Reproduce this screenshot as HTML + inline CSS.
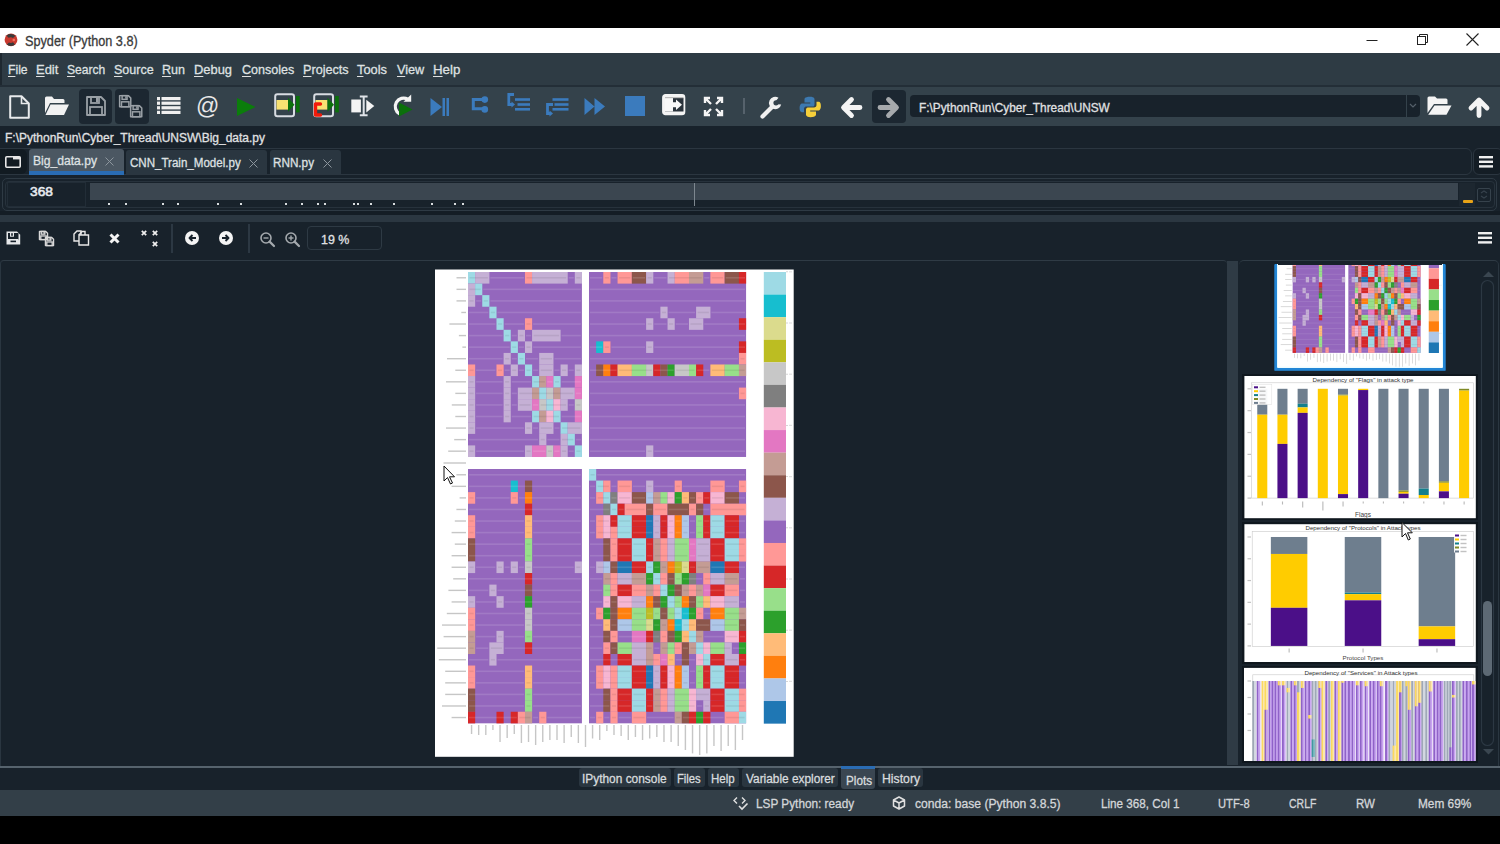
<!DOCTYPE html>
<html><head><meta charset="utf-8"><style>
html,body{margin:0;padding:0;}
body{width:1500px;height:844px;position:relative;overflow:hidden;background:#18222b;font-family:"Liberation Sans",sans-serif;}
u{text-decoration:underline;text-underline-offset:2px;}
</style></head><body>
<div style="position:absolute;left:0px;top:0px;width:1500px;height:28px;background:#000;"></div><div style="position:absolute;left:0px;top:28px;width:1500px;height:25px;background:#ffffff;"></div><div style="position:absolute;left:0px;top:53px;width:1500px;height:33px;background:#2e3b44;"></div><div style="position:absolute;left:0px;top:86px;width:1500px;height:40px;background:#34424b;"></div><div style="position:absolute;left:0px;top:126px;width:1500px;height:22px;background:#18222b;"></div><div style="position:absolute;left:0px;top:148px;width:1500px;height:29px;background:#18222b;"></div><div style="position:absolute;left:0px;top:177px;width:1500px;height:35px;background:#18222b;"></div><div style="position:absolute;left:0px;top:212px;width:1500px;height:4px;background:#18222b;"></div><div style="position:absolute;left:0px;top:215px;width:1500px;height:7px;background:#2b3741;"></div><div style="position:absolute;left:0px;top:222px;width:1500px;height:38px;background:#18222b;"></div><div style="position:absolute;left:0px;top:260px;width:1500px;height:506px;background:#18222b;"></div><div style="position:absolute;left:0px;top:766px;width:1500px;height:24px;background:#18222b;"></div><div style="position:absolute;left:0px;top:790px;width:1500px;height:26px;background:#333f48;"></div><div style="position:absolute;left:0px;top:816px;width:1500px;height:28px;background:#000;"></div><svg style="position:absolute;left:4px;top:33px;overflow:visible;" width="14" height="14" viewBox="0 0 14 14"><circle cx="7" cy="6.8" r="6.4" fill="#c8392e"/><path d="M2.5 2.5 Q7 -0.5 11.5 2.8 L9 5 Q7 3.5 4.5 4.8 Z" fill="#3a3a3a"/><path d="M2.8 11.5 Q7 14.5 11 11.5 L9 9.2 Q7 10.5 5 9.5 Z" fill="#3a3a3a"/><circle cx="9.8" cy="7" r="1.3" fill="#f07060"/></svg><svg style="position:absolute;left:1366px;top:34px;overflow:visible;" width="12" height="12" viewBox="0 0 12 12"><path d="M0.5 6.5 H11.5" stroke="#222" stroke-width="1"/></svg><svg style="position:absolute;left:1416px;top:33px;overflow:visible;" width="13" height="13" viewBox="0 0 13 13"><rect x="1.5" y="3.5" width="8" height="8" fill="none" stroke="#222" stroke-width="1"/><path d="M3.5 3.5 V1.5 H11.5 V9.5 H9.5" fill="none" stroke="#222" stroke-width="1"/></svg><svg style="position:absolute;left:1466px;top:33px;overflow:visible;" width="13" height="13" viewBox="0 0 13 13"><path d="M0.5 0.5 L12.5 12.5 M12.5 0.5 L0.5 12.5" stroke="#222" stroke-width="1.1"/></svg><div style="position:absolute;left:0px;top:53px;width:1.5px;height:33px;background:#1e2830;"></div><div style="position:absolute;left:0px;top:85px;width:1500px;height:1.5px;background:#232e37;"></div><div style="position:absolute;left:79px;top:89px;width:33px;height:35px;background:#1c2731;border-radius:4px;"></div><div style="position:absolute;left:115px;top:89px;width:34px;height:35px;background:#1c2731;border-radius:4px;"></div><div style="position:absolute;left:872px;top:90px;width:34px;height:33px;background:#1c2731;border-radius:4px;"></div><svg style="position:absolute;left:9px;top:95px;overflow:visible;" width="22" height="24" viewBox="0 0 22 24"><path d="M1.2 1.2 H12.5 L19.8 8.5 V22.8 H1.2 Z" fill="none" stroke="#e8eaec" stroke-width="2" stroke-linejoin="round"/><path d="M12.5 1.2 V8.5 H19.8" fill="none" stroke="#e8eaec" stroke-width="1.6"/></svg><svg style="position:absolute;left:44px;top:96px;overflow:visible;" width="26" height="20" viewBox="0 0 26 20"><path d="M1 2 Q1 0.5 2.5 0.5 H8 L10 3 H19 Q20.5 3 20.5 4.5 V7 H6 L1 17 Z" fill="#f2f2f2"/><path d="M6.5 8.5 H25 L20 19 H1.5 Z" fill="#f2f2f2"/></svg><svg style="position:absolute;left:86px;top:96px;overflow:visible;" width="20.0" height="20.0" viewBox="0 0 20.0 20.0"><g transform="scale(1.0)"><path d="M1 1 H15 L19 5 V19 H1 Z" fill="none" stroke="#9aa0a6" stroke-width="1.8" stroke-linejoin="round"/><rect x="5" y="1" width="8" height="6" fill="none" stroke="#9aa0a6" stroke-width="1.8"/><rect x="10" y="2" width="2" height="4" fill="#9aa0a6"/><rect x="4" y="11" width="12" height="8" fill="none" stroke="#9aa0a6" stroke-width="1.8"/></g></svg><svg style="position:absolute;left:119px;top:95px;overflow:visible;" width="12.4" height="12.4" viewBox="0 0 12.4 12.4"><g transform="scale(0.62)"><path d="M1 1 H15 L19 5 V19 H1 Z" fill="none" stroke="#9aa0a6" stroke-width="2.4" stroke-linejoin="round"/><rect x="5" y="1" width="8" height="6" fill="none" stroke="#9aa0a6" stroke-width="2.4"/><rect x="10" y="2" width="2" height="4" fill="#9aa0a6"/><rect x="4" y="11" width="12" height="8" fill="none" stroke="#9aa0a6" stroke-width="2.4"/></g></svg><svg style="position:absolute;left:130px;top:105px;overflow:visible;" width="12.4" height="12.4" viewBox="0 0 12.4 12.4"><g transform="scale(0.62)"><path d="M1 1 H15 L19 5 V19 H1 Z" fill="none" stroke="#9aa0a6" stroke-width="2.4" stroke-linejoin="round"/><rect x="5" y="1" width="8" height="6" fill="none" stroke="#9aa0a6" stroke-width="2.4"/><rect x="10" y="2" width="2" height="4" fill="#9aa0a6"/><rect x="4" y="11" width="12" height="8" fill="none" stroke="#9aa0a6" stroke-width="2.4"/></g></svg><svg style="position:absolute;left:157px;top:97px;overflow:visible;" width="24" height="19" viewBox="0 0 24 19"><rect x="0" y="0.0" width="3" height="3.2" fill="#f0f0f0"/><rect x="4.5" y="0.0" width="19" height="3.2" fill="#f0f0f0"/><rect x="0" y="4.6" width="3" height="3.2" fill="#f0f0f0"/><rect x="4.5" y="4.6" width="19" height="3.2" fill="#f0f0f0"/><rect x="0" y="9.2" width="3" height="3.2" fill="#f0f0f0"/><rect x="4.5" y="9.2" width="19" height="3.2" fill="#f0f0f0"/><rect x="0" y="13.799999999999999" width="3" height="3.2" fill="#f0f0f0"/><rect x="4.5" y="13.799999999999999" width="19" height="3.2" fill="#f0f0f0"/></svg><div style="position:absolute;left:196px;top:92px;font-size:23px;line-height:28px;color:#e8e8e8;font-family:'Liberation Sans';">@</div><svg style="position:absolute;left:237px;top:98px;overflow:visible;" width="19" height="18" viewBox="0 0 19 18"><path d="M0 0 L18.5 9 L0 18 Z" fill="#0b7d0b"/></svg><svg style="position:absolute;left:273px;top:93px;overflow:visible;" width="28" height="24" viewBox="0 0 28 24"><rect x="2.2" y="1.2" width="18.8" height="22" rx="2.2" fill="none" stroke="#d8dce2" stroke-width="2"/><rect x="3.5" y="7" width="11.5" height="9.6" fill="#f8e272"/><path d="M15 4.8 L21.5 11.8 L15 18.8 Z" fill="#0b700b"/><rect x="23" y="3" width="3.6" height="16.4" fill="#0b700b"/></svg><svg style="position:absolute;left:312px;top:93px;overflow:visible;" width="28" height="24" viewBox="0 0 28 24"><rect x="2.2" y="1.2" width="18.8" height="22" rx="2.2" fill="none" stroke="#d8dce2" stroke-width="2"/><rect x="3.5" y="7" width="12" height="9.6" fill="#f8e272"/><path d="M8.5 11 H3.5 V22 H8.5" fill="none" stroke="#f21a0a" stroke-width="3.4" stroke-linejoin="round" stroke-linecap="round"/><path d="M15.5 4.8 L22 11.8 L15.5 18.8 Z" fill="#0b700b"/><rect x="23.2" y="3" width="3.6" height="16.4" fill="#0b700b"/></svg><svg style="position:absolute;left:351px;top:95px;overflow:visible;" width="25" height="22" viewBox="0 0 25 22"><rect x="0.3" y="4.5" width="9.6" height="12.9" fill="#f4f4f4"/><path d="M8.8 1.5 H16.6 M12.7 1.5 V20.2 M8.8 20.2 H16.6" stroke="#dfe3e8" stroke-width="2"/><path d="M15.3 4.8 L23.3 11 L15.3 17.4 Z" fill="#f4f4f4"/></svg><svg style="position:absolute;left:391px;top:94px;overflow:visible;" width="23" height="24" viewBox="0 0 23 24"><path d="M16.8 5.2 A8 8 0 1 0 8.5 19.8" fill="none" stroke="#f4f4f4" stroke-width="3.2"/><path d="M12.5 7.8 L20.2 7.8 L20.2 0.6 Z" fill="#f4f4f4"/><path d="M8 8.5 L21.5 15.5 L8 22.4 Z" fill="#0b700b"/></svg><svg style="position:absolute;left:430px;top:97px;overflow:visible;" width="20" height="20" viewBox="0 0 20 20"><path d="M0.5 1 L12 10 L0.5 19 Z" fill="#3b7bbd"/><rect x="12.5" y="1" width="2.5" height="18" fill="#3b7bbd"/><rect x="16.5" y="1" width="2.5" height="18" fill="#3b7bbd"/></svg><svg style="position:absolute;left:471px;top:96px;overflow:visible;" width="19" height="18" viewBox="0 0 19 18"><path d="M13 3.5 H2.3 V12.8 H13" fill="none" stroke="#3b7bbd" stroke-width="3"/><circle cx="13.8" cy="3.6" r="3.3" fill="#3b7bbd"/><circle cx="13.8" cy="13.4" r="3.3" fill="#3b7bbd"/></svg><svg style="position:absolute;left:506px;top:92px;overflow:visible;" width="25" height="20" viewBox="0 0 25 20"><path d="M8 2.5 H2.8 V12.5 H6" fill="none" stroke="#3b7bbd" stroke-width="2.8"/><path d="M5.5 9.5 L9 12.5 L5.5 15.5 Z" fill="#3b7bbd"/><rect x="9" y="6.2" width="15" height="2.6" fill="#3b7bbd"/><rect x="11.5" y="11.2" width="12.5" height="2.6" fill="#3b7bbd"/><rect x="9" y="16" width="15" height="2.6" fill="#3b7bbd"/></svg><svg style="position:absolute;left:545px;top:96px;overflow:visible;" width="25" height="21" viewBox="0 0 25 21"><path d="M8 8.5 H2.5 V17.5 H5" fill="none" stroke="#3b7bbd" stroke-width="2.8"/><path d="M4.5 14.5 L8 17.5 L4.5 20.5 Z" fill="#3b7bbd"/><rect x="7.5" y="2.2" width="16" height="2.6" fill="#3b7bbd"/><rect x="9.5" y="7.2" width="14" height="2.6" fill="#3b7bbd"/><rect x="7.5" y="12" width="16" height="2.6" fill="#3b7bbd"/></svg><svg style="position:absolute;left:584px;top:97px;overflow:visible;" width="22" height="19" viewBox="0 0 22 19"><path d="M0.5 1 L10.5 9.5 L0.5 18 Z M10.5 1 L21 9.5 L10.5 18 Z" fill="#3b7bbd"/></svg><div style="position:absolute;left:625px;top:96px;width:20px;height:20px;background:#3b7bbd;"></div><svg style="position:absolute;left:662px;top:94px;overflow:visible;" width="24" height="22" viewBox="0 0 24 22"><rect x="1.2" y="1.2" width="21" height="19" rx="2.2" fill="#f4f4f4" stroke="#f4f4f4" stroke-width="2.2"/><rect x="3" y="4" width="18.5" height="13.5" fill="#2a333b"/><rect x="3" y="4" width="8" height="13.5" fill="#f8f8f8"/><path d="M9 8.3 H14 V5.5 L20 10.8 L14 16 V13.2 H9 Z" fill="#f8f8f8"/><rect x="3" y="3" width="18.5" height="1.2" fill="#bbb"/></svg><svg style="position:absolute;left:704px;top:97px;overflow:visible;" width="19" height="19" viewBox="0 0 19 19"><g fill="none" stroke="#f4f4f4" stroke-width="2.4"><path d="M1 6 V1 H6 M1 1 L7 7"/><path d="M13 1 H18 V6 M18 1 L12 7"/><path d="M1 13 V18 H6 M1 18 L7 12"/><path d="M18 13 V18 H13 M18 18 L12 12"/></g></svg><div style="position:absolute;left:743px;top:98px;width:1.5px;height:16px;background:#56626c;"></div><svg style="position:absolute;left:760px;top:96px;overflow:visible;" width="23" height="23" viewBox="0 0 23 23"><path d="M2.5 20.5 L12 11" stroke="#f0f0f0" stroke-width="4.2" stroke-linecap="round"/><path d="M18.5 1.8 A6.2 6.2 0 1 0 21.2 8.5 L17.5 8.2 L15.2 5.8 Z" fill="#f0f0f0"/><circle cx="16" cy="6.8" r="2.6" fill="#34424b"/></svg><svg style="position:absolute;left:799px;top:96px;overflow:visible;" width="23" height="22" viewBox="0 0 23 22"><path d="M11 0.8 C5 0.8 5.5 3.5 5.5 3.5 V6.5 H11.3 V7.5 H3.2 C3.2 7.5 0.6 7.4 0.6 12 C0.6 16.5 3 16.2 3 16.2 H5 V13 C5 13 5 10.6 7.4 10.6 H13.2 C13.2 10.6 15.5 10.7 15.5 8.4 V3.4 C15.5 3.4 15.8 0.8 11 0.8 Z" fill="#3d79b0"/><path d="M11.5 21.2 C17.5 21.2 17 18.5 17 18.5 V15.5 H11.2 V14.5 H19.3 C19.3 14.5 21.9 14.6 21.9 10 C21.9 5.5 19.5 5.8 19.5 5.8 H17.5 V9 C17.5 9 17.5 11.4 15.1 11.4 H9.3 C9.3 11.4 7 11.3 7 13.6 V18.6 C7 18.6 6.7 21.2 11.5 21.2 Z" fill="#f6cf3a"/></svg><svg style="position:absolute;left:841px;top:97px;overflow:visible;" width="21" height="21" viewBox="0 0 21 21"><path d="M19 10.5 H4 M10.5 2.5 L2.5 10.5 L10.5 18.5" fill="none" stroke="#f4f4f4" stroke-width="4.8" stroke-linecap="round" stroke-linejoin="round"/></svg><svg style="position:absolute;left:878px;top:97px;overflow:visible;" width="21" height="21" viewBox="0 0 21 21"><path d="M2 10.5 H17 M10.5 2.5 L18.5 10.5 L10.5 18.5" fill="none" stroke="#a6a9ac" stroke-width="4.8" stroke-linecap="round" stroke-linejoin="round"/></svg><div style="position:absolute;left:910px;top:95px;width:496px;height:22px;background:#18222b;border-radius:4px 0 0 4px;"></div><div style="position:absolute;left:1407px;top:95px;width:12.5px;height:22px;background:#18222b;border-radius:0 4px 4px 0;"></div><svg style="position:absolute;left:1409px;top:103px;overflow:visible;" width="8" height="5" viewBox="0 0 8 5"><path d="M1 1 L4 4 L7 1" fill="none" stroke="#55606a" stroke-width="1.2"/></svg><svg style="position:absolute;left:1427px;top:96px;overflow:visible;" width="25" height="19" viewBox="0 0 25 19"><path d="M0.5 2 Q0.5 0.5 2 0.5 H8 L10 2.5 H19 Q20.5 2.5 20.5 4 V8 H7 L0.5 17 Z" fill="#f4f4f4"/><path d="M7.5 9.5 H24.5 L19.5 18.8 H1.2 Z" fill="#f4f4f4"/></svg><svg style="position:absolute;left:1468px;top:97px;overflow:visible;" width="22" height="20" viewBox="0 0 22 20"><path d="M11 18.5 V3.5 M3 11 L11 3 L19 11" fill="none" stroke="#f4f4f4" stroke-width="4.8" stroke-linecap="round" stroke-linejoin="round"/></svg><div style="position:absolute;left:-6px;top:148px;width:1478px;height:27px;background:transparent;border:1px solid #2b3640;border-radius:6px;box-sizing:border-box;"></div><div style="position:absolute;left:1473px;top:148px;width:30px;height:27px;background:#141d25;border:1px solid #2b3640;border-radius:6px;box-sizing:border-box;"></div><div style="position:absolute;left:0px;top:149px;width:27px;height:25px;background:#121b22;border-radius:0 6px 6px 0;"></div><svg style="position:absolute;left:5px;top:156px;overflow:visible;" width="16" height="12" viewBox="0 0 16 12"><rect x="0.8" y="0.8" width="14.4" height="10.4" rx="1" fill="none" stroke="#e8e8e8" stroke-width="1.6"/><rect x="8" y="0.8" width="7.2" height="2.6" fill="#e8e8e8"/></svg><div style="position:absolute;left:29px;top:149px;width:95px;height:26px;background:#4b5762;border-radius:3px 3px 0 0;"></div><div style="position:absolute;left:29px;top:171px;width:95px;height:4px;background:#2a6cb3;"></div><svg style="position:absolute;left:105px;top:157px;overflow:visible;" width="9" height="9" viewBox="0 0 9 9"><path d="M0.5 0.5 L8.5 8.5 M8.5 0.5 L0.5 8.5" stroke="#8d969e" stroke-width="1"/></svg><div style="position:absolute;left:126px;top:150px;width:141px;height:24px;background:#2a3640;border-radius:3px 3px 0 0;"></div><svg style="position:absolute;left:249px;top:158.5px;overflow:visible;" width="9" height="9" viewBox="0 0 9 9"><path d="M0.5 0.5 L8.5 8.5 M8.5 0.5 L0.5 8.5" stroke="#8d969e" stroke-width="1"/></svg><div style="position:absolute;left:270px;top:150px;width:71px;height:24px;background:#2a3640;border-radius:3px 3px 0 0;"></div><svg style="position:absolute;left:323px;top:158.5px;overflow:visible;" width="9" height="9" viewBox="0 0 9 9"><path d="M0.5 0.5 L8.5 8.5 M8.5 0.5 L0.5 8.5" stroke="#8d969e" stroke-width="1"/></svg><svg style="position:absolute;left:1479px;top:156px;overflow:visible;" width="14" height="12" viewBox="0 0 14 12"><rect x="0" y="0.0" width="14" height="2.4" fill="#f0f0f0"/><rect x="0" y="4.6" width="14" height="2.4" fill="#f0f0f0"/><rect x="0" y="9.2" width="14" height="2.4" fill="#f0f0f0"/></svg><div style="position:absolute;left:2px;top:178px;width:1495px;height:33px;background:transparent;border:1px solid #2e3a44;border-radius:5px;box-sizing:border-box;"></div><div style="position:absolute;left:7px;top:182px;width:79px;height:25px;background:#18222b;border:1px solid #222d37;box-sizing:border-box;"></div><div style="position:absolute;left:90px;top:183px;width:1368px;height:16.5px;background:#3b4650;"></div><div style="position:absolute;left:694px;top:183px;width:1px;height:23px;background:#7d878f;"></div><div style="position:absolute;left:107.5px;top:203px;width:2px;height:2px;background:#d8dcdf;"></div><div style="position:absolute;left:124.5px;top:203px;width:2px;height:2px;background:#d8dcdf;"></div><div style="position:absolute;left:161.5px;top:203px;width:2px;height:2px;background:#d8dcdf;"></div><div style="position:absolute;left:177px;top:203px;width:2px;height:2px;background:#d8dcdf;"></div><div style="position:absolute;left:216.5px;top:203px;width:2px;height:2px;background:#d8dcdf;"></div><div style="position:absolute;left:239.5px;top:203px;width:2px;height:2px;background:#d8dcdf;"></div><div style="position:absolute;left:284.5px;top:203px;width:2px;height:2px;background:#d8dcdf;"></div><div style="position:absolute;left:300.5px;top:203px;width:2px;height:2px;background:#d8dcdf;"></div><div style="position:absolute;left:317px;top:203px;width:2px;height:2px;background:#d8dcdf;"></div><div style="position:absolute;left:323.5px;top:203px;width:2px;height:2px;background:#d8dcdf;"></div><div style="position:absolute;left:352.5px;top:203px;width:2px;height:2px;background:#d8dcdf;"></div><div style="position:absolute;left:356.5px;top:203px;width:2px;height:2px;background:#d8dcdf;"></div><div style="position:absolute;left:369.5px;top:203px;width:2px;height:2px;background:#d8dcdf;"></div><div style="position:absolute;left:392.5px;top:203px;width:2px;height:2px;background:#d8dcdf;"></div><div style="position:absolute;left:431px;top:203px;width:2px;height:2px;background:#d8dcdf;"></div><div style="position:absolute;left:454px;top:203px;width:2px;height:2px;background:#d8dcdf;"></div><div style="position:absolute;left:461.5px;top:203px;width:2px;height:2px;background:#d8dcdf;"></div><div style="position:absolute;left:5px;top:181px;width:1490px;height:27px;background:transparent;border:1px solid #27323c;border-radius:4px;box-sizing:border-box;"></div><div style="position:absolute;left:1459px;top:183px;width:16px;height:23px;background:#1d2730;"></div><div style="position:absolute;left:1462.5px;top:199.5px;width:10px;height:3.3px;background:#e8a317;border-radius:1px;"></div><div style="position:absolute;left:1477px;top:187.5px;width:13.5px;height:14px;background:transparent;border:1px solid #36424c;border-radius:2px;box-sizing:border-box;"></div><svg style="position:absolute;left:1479px;top:190px;overflow:visible;" width="10" height="9" viewBox="0 0 10 9"><path d="M2 3 L5 1 L8 3 M2 6 L5 8 L8 6" fill="none" stroke="#36424c" stroke-width="1.2"/></svg><div style="position:absolute;left:0px;top:211px;width:1500px;height:4px;background:#141d25;"></div><svg style="position:absolute;left:6px;top:231px;overflow:visible;" width="15" height="14" viewBox="0 0 15 14"><path d="M0.5 0.5 H11 L14.2 3.7 V13.5 H0.5 Z" fill="#e6e8ea"/><rect x="2" y="2" width="10.5" height="7.2" fill="#18222b"/><rect x="4" y="1.5" width="4" height="4.2" fill="#e6e8ea"/><rect x="5.2" y="2.2" width="1.6" height="2.6" fill="#18222b"/><rect x="2" y="8" width="10.5" height="4" fill="#e6e8ea"/><rect x="4.5" y="9.6" width="5.5" height="1.6" fill="#18222b"/></svg><svg style="position:absolute;left:39px;top:231px;overflow:visible;" width="9.0" height="9.0" viewBox="0 0 9.0 9.0"><g transform="scale(0.45)"><path d="M1 1 H15 L19 5 V19 H1 Z" fill="none" stroke="#d8d8d8" stroke-width="3.0" stroke-linejoin="round"/><rect x="5" y="1" width="8" height="6" fill="none" stroke="#d8d8d8" stroke-width="3.0"/><rect x="10" y="2" width="2" height="4" fill="#d8d8d8"/><rect x="4" y="11" width="12" height="8" fill="none" stroke="#d8d8d8" stroke-width="3.0"/></g></svg><svg style="position:absolute;left:45px;top:237px;overflow:visible;" width="9.0" height="9.0" viewBox="0 0 9.0 9.0"><g transform="scale(0.45)"><path d="M1 1 H15 L19 5 V19 H1 Z" fill="none" stroke="#d8d8d8" stroke-width="3.0" stroke-linejoin="round"/><rect x="5" y="1" width="8" height="6" fill="none" stroke="#d8d8d8" stroke-width="3.0"/><rect x="10" y="2" width="2" height="4" fill="#d8d8d8"/><rect x="4" y="11" width="12" height="8" fill="none" stroke="#d8d8d8" stroke-width="3.0"/></g></svg><svg style="position:absolute;left:73px;top:230px;overflow:visible;" width="17" height="16" viewBox="0 0 17 16"><path d="M1 4 L4 1 H8 V11 H1 Z" fill="none" stroke="#e8e8e8" stroke-width="1.4"/><path d="M6 5 H15.5 V15 H6 Z" fill="#18222b" stroke="#e8e8e8" stroke-width="1.4"/><path d="M6 5 L9 1.5 H12 V5" fill="none" stroke="#e8e8e8" stroke-width="1.4"/></svg><svg style="position:absolute;left:109px;top:233px;overflow:visible;" width="11" height="11" viewBox="0 0 11 11"><path d="M1.5 1.5 L9.5 9.5 M9.5 1.5 L1.5 9.5" stroke="#f4f4f4" stroke-width="3"/></svg><svg style="position:absolute;left:141px;top:230px;overflow:visible;" width="6" height="6" viewBox="0 0 6 6"><path d="M0.8 0.8 L5.2 5.2 M5.2 0.8 L0.8 5.2" stroke="#f0f0f0" stroke-width="1.7"/></svg><svg style="position:absolute;left:151.7px;top:230px;overflow:visible;" width="6" height="6" viewBox="0 0 6 6"><path d="M0.8 0.8 L5.2 5.2 M5.2 0.8 L0.8 5.2" stroke="#f0f0f0" stroke-width="1.7"/></svg><svg style="position:absolute;left:151.7px;top:240.5px;overflow:visible;" width="6" height="6" viewBox="0 0 6 6"><path d="M0.8 0.8 L5.2 5.2 M5.2 0.8 L0.8 5.2" stroke="#f0f0f0" stroke-width="1.7"/></svg><div style="position:absolute;left:171px;top:224px;width:1.5px;height:29px;background:#2c3843;"></div><svg style="position:absolute;left:185px;top:230.8px;overflow:visible;" width="14" height="14" viewBox="0 0 14 14"><circle cx="7" cy="7" r="7" fill="#f4f4f4"/><path d="M11 7 H4.5 M7.5 4 L4.5 7 L7.5 10" fill="none" stroke="#18222b" stroke-width="1.9" stroke-linejoin="round"/></svg><svg style="position:absolute;left:219px;top:230.8px;overflow:visible;" width="14" height="14" viewBox="0 0 14 14"><circle cx="7" cy="7" r="7" fill="#f4f4f4"/><path d="M3 7 H9.5 M6.5 4 L9.5 7 L6.5 10" fill="none" stroke="#18222b" stroke-width="1.9" stroke-linejoin="round"/></svg><div style="position:absolute;left:248px;top:224px;width:1.5px;height:29px;background:#2c3843;"></div><svg style="position:absolute;left:260px;top:231.5px;overflow:visible;" width="15" height="15" viewBox="0 0 15 15"><circle cx="6" cy="6" r="5" fill="none" stroke="#a4a9ad" stroke-width="1.6"/><path d="M9.6 9.6 L14 14" stroke="#a4a9ad" stroke-width="2.2" stroke-linecap="round"/><path d="M3.5 6 H8.5" stroke="#a4a9ad" stroke-width="1.4"/></svg><svg style="position:absolute;left:285px;top:231.5px;overflow:visible;" width="15" height="15" viewBox="0 0 15 15"><circle cx="6" cy="6" r="5" fill="none" stroke="#a4a9ad" stroke-width="1.6"/><path d="M9.6 9.6 L14 14" stroke="#a4a9ad" stroke-width="2.2" stroke-linecap="round"/><path d="M3.5 6 H8.5" stroke="#a4a9ad" stroke-width="1.4"/><path d="M6 3.5 V8.5" stroke="#a4a9ad" stroke-width="1.4"/></svg><div style="position:absolute;left:306.5px;top:225.5px;width:75px;height:24.5px;background:transparent;border:1px solid #2e3a44;border-radius:4px;box-sizing:border-box;"></div><svg style="position:absolute;left:1478px;top:232px;overflow:visible;" width="14" height="12" viewBox="0 0 14 12"><rect x="0" y="0.0" width="14" height="2.4" fill="#f0f0f0"/><rect x="0" y="4.6" width="14" height="2.4" fill="#f0f0f0"/><rect x="0" y="9.2" width="14" height="2.4" fill="#f0f0f0"/></svg><div style="position:absolute;left:0px;top:260px;width:1227px;height:506px;background:#18222b;border-top:1px solid #2f3b45;border-left:1px solid #2a3640;border-radius:4px 4px 0 0;box-sizing:border-box;"></div><div style="position:absolute;left:1227px;top:261px;width:11px;height:504px;background:#2f3b45;"></div><div style="position:absolute;left:1239px;top:260px;width:260px;height:506px;background:#18222b;border-top:1px solid #2f3b45;border-right:1px solid #2a3640;border-radius:5px 5px 0 0;box-sizing:border-box;"></div><svg style="position:absolute;left:0;top:0" width="1500" height="844" viewBox="0 0 1500 844"><defs><clipPath id="cp1"><rect x="1274" y="265" width="172" height="106"/></clipPath><clipPath id="cp4"><rect x="1240" y="664" width="240" height="97"/></clipPath></defs><g id="hmfig"><rect x="435" y="269.5" width="358.7" height="487.3" fill="#fff"/><rect x="468.00" y="272.00" width="113.92" height="184.96" fill="#9467bd"/><rect x="468.00" y="272.00" width="7.17" height="11.61" fill="#9edae5"/><rect x="475.12" y="272.00" width="14.29" height="11.61" fill="#c5b0d5"/><rect x="524.96" y="272.00" width="7.17" height="11.61" fill="#ff9896"/><rect x="532.08" y="272.00" width="35.65" height="11.61" fill="#c5b0d5"/><rect x="574.80" y="272.00" width="7.17" height="11.61" fill="#c5b0d5"/><rect x="468.00" y="283.56" width="7.17" height="11.61" fill="#c5b0d5"/><rect x="475.12" y="283.56" width="7.17" height="11.61" fill="#9edae5"/><rect x="468.00" y="295.12" width="7.17" height="11.61" fill="#c5b0d5"/><rect x="482.24" y="295.12" width="7.17" height="11.61" fill="#9edae5"/><rect x="489.36" y="306.68" width="7.17" height="11.61" fill="#9edae5"/><rect x="496.48" y="318.24" width="7.17" height="11.61" fill="#9edae5"/><rect x="524.96" y="318.24" width="7.17" height="11.61" fill="#ff9896"/><rect x="503.60" y="329.80" width="7.17" height="11.61" fill="#9edae5"/><rect x="517.84" y="329.80" width="7.17" height="11.61" fill="#c5b0d5"/><rect x="532.08" y="329.80" width="28.53" height="11.61" fill="#c5b0d5"/><rect x="510.72" y="341.36" width="7.17" height="11.61" fill="#9edae5"/><rect x="524.96" y="341.36" width="7.17" height="11.61" fill="#c5b0d5"/><rect x="503.60" y="352.92" width="7.17" height="11.61" fill="#c5b0d5"/><rect x="517.84" y="352.92" width="7.17" height="11.61" fill="#9edae5"/><rect x="539.20" y="352.92" width="14.29" height="11.61" fill="#c5b0d5"/><rect x="468.00" y="364.48" width="7.17" height="11.61" fill="#ff9896"/><rect x="496.48" y="364.48" width="7.17" height="11.61" fill="#ff9896"/><rect x="510.72" y="364.48" width="7.17" height="11.61" fill="#c5b0d5"/><rect x="524.96" y="364.48" width="7.17" height="11.61" fill="#9edae5"/><rect x="539.20" y="364.48" width="14.29" height="11.61" fill="#c5b0d5"/><rect x="560.56" y="364.48" width="7.17" height="11.61" fill="#c5b0d5"/><rect x="574.80" y="364.48" width="7.17" height="11.61" fill="#c5b0d5"/><rect x="468.00" y="376.04" width="7.17" height="11.61" fill="#c5b0d5"/><rect x="503.60" y="376.04" width="7.17" height="11.61" fill="#c5b0d5"/><rect x="532.08" y="376.04" width="7.17" height="11.61" fill="#9edae5"/><rect x="539.20" y="376.04" width="7.17" height="11.61" fill="#c49c94"/><rect x="546.32" y="376.04" width="7.17" height="11.61" fill="#e377c2"/><rect x="553.44" y="376.04" width="7.17" height="11.61" fill="#9edae5"/><rect x="574.80" y="376.04" width="7.17" height="11.61" fill="#e377c2"/><rect x="468.00" y="387.60" width="7.17" height="11.61" fill="#c5b0d5"/><rect x="503.60" y="387.60" width="7.17" height="11.61" fill="#c5b0d5"/><rect x="517.84" y="387.60" width="14.29" height="11.61" fill="#c5b0d5"/><rect x="532.08" y="387.60" width="7.17" height="11.61" fill="#c49c94"/><rect x="539.20" y="387.60" width="7.17" height="11.61" fill="#9edae5"/><rect x="546.32" y="387.60" width="7.17" height="11.61" fill="#c7c7c7"/><rect x="553.44" y="387.60" width="7.17" height="11.61" fill="#c49c94"/><rect x="560.56" y="387.60" width="14.29" height="11.61" fill="#c5b0d5"/><rect x="574.80" y="387.60" width="7.17" height="11.61" fill="#e377c2"/><rect x="468.00" y="399.16" width="7.17" height="11.61" fill="#c5b0d5"/><rect x="503.60" y="399.16" width="7.17" height="11.61" fill="#c5b0d5"/><rect x="517.84" y="399.16" width="14.29" height="11.61" fill="#c5b0d5"/><rect x="532.08" y="399.16" width="7.17" height="11.61" fill="#e377c2"/><rect x="539.20" y="399.16" width="7.17" height="11.61" fill="#c7c7c7"/><rect x="546.32" y="399.16" width="7.17" height="11.61" fill="#9edae5"/><rect x="553.44" y="399.16" width="7.17" height="11.61" fill="#f7b6d2"/><rect x="560.56" y="399.16" width="7.17" height="11.61" fill="#c5b0d5"/><rect x="574.80" y="399.16" width="7.17" height="11.61" fill="#c7c7c7"/><rect x="468.00" y="410.72" width="7.17" height="11.61" fill="#c5b0d5"/><rect x="503.60" y="410.72" width="7.17" height="11.61" fill="#c5b0d5"/><rect x="532.08" y="410.72" width="7.17" height="11.61" fill="#9edae5"/><rect x="539.20" y="410.72" width="7.17" height="11.61" fill="#c49c94"/><rect x="546.32" y="410.72" width="7.17" height="11.61" fill="#f7b6d2"/><rect x="553.44" y="410.72" width="7.17" height="11.61" fill="#9edae5"/><rect x="574.80" y="410.72" width="7.17" height="11.61" fill="#e377c2"/><rect x="468.00" y="422.28" width="7.17" height="11.61" fill="#c5b0d5"/><rect x="524.96" y="422.28" width="7.17" height="11.61" fill="#c5b0d5"/><rect x="539.20" y="422.28" width="14.29" height="11.61" fill="#c5b0d5"/><rect x="560.56" y="422.28" width="7.17" height="11.61" fill="#9edae5"/><rect x="567.68" y="422.28" width="14.29" height="11.61" fill="#c5b0d5"/><rect x="539.20" y="433.84" width="7.17" height="11.61" fill="#c5b0d5"/><rect x="560.56" y="433.84" width="7.17" height="11.61" fill="#c5b0d5"/><rect x="567.68" y="433.84" width="7.17" height="11.61" fill="#9edae5"/><rect x="468.00" y="445.40" width="7.17" height="11.61" fill="#c5b0d5"/><rect x="524.96" y="445.40" width="7.17" height="11.61" fill="#c5b0d5"/><rect x="532.08" y="445.40" width="14.29" height="11.61" fill="#e377c2"/><rect x="546.32" y="445.40" width="7.17" height="11.61" fill="#c7c7c7"/><rect x="553.44" y="445.40" width="7.17" height="11.61" fill="#e377c2"/><rect x="560.56" y="445.40" width="7.17" height="11.61" fill="#c5b0d5"/><rect x="574.80" y="445.40" width="7.17" height="11.61" fill="#9edae5"/><rect x="469.50" y="276.98" width="18.36" height="1.6" fill="#000000" opacity="0.07"/><rect x="490.36" y="276.98" width="33.60" height="1.6" fill="#ffffff" opacity="0.13"/><rect x="526.46" y="276.98" width="39.72" height="1.6" fill="#000000" opacity="0.07"/><rect x="568.68" y="276.98" width="5.12" height="1.6" fill="#ffffff" opacity="0.13"/><rect x="576.30" y="276.98" width="4.12" height="1.6" fill="#000000" opacity="0.07"/><rect x="469.50" y="288.54" width="11.24" height="1.6" fill="#000000" opacity="0.07"/><rect x="483.24" y="288.54" width="97.68" height="1.6" fill="#ffffff" opacity="0.13"/><rect x="469.50" y="300.10" width="4.12" height="1.6" fill="#000000" opacity="0.07"/><rect x="476.12" y="300.10" width="5.12" height="1.6" fill="#ffffff" opacity="0.13"/><rect x="483.74" y="300.10" width="4.12" height="1.6" fill="#000000" opacity="0.07"/><rect x="490.36" y="300.10" width="90.56" height="1.6" fill="#ffffff" opacity="0.13"/><rect x="469.00" y="311.66" width="19.36" height="1.6" fill="#ffffff" opacity="0.13"/><rect x="490.86" y="311.66" width="4.12" height="1.6" fill="#000000" opacity="0.07"/><rect x="497.48" y="311.66" width="83.44" height="1.6" fill="#ffffff" opacity="0.13"/><rect x="469.00" y="323.22" width="26.48" height="1.6" fill="#ffffff" opacity="0.13"/><rect x="497.98" y="323.22" width="4.12" height="1.6" fill="#000000" opacity="0.07"/><rect x="504.60" y="323.22" width="19.36" height="1.6" fill="#ffffff" opacity="0.13"/><rect x="526.46" y="323.22" width="4.12" height="1.6" fill="#000000" opacity="0.07"/><rect x="533.08" y="323.22" width="47.84" height="1.6" fill="#ffffff" opacity="0.13"/><rect x="469.00" y="334.78" width="33.60" height="1.6" fill="#ffffff" opacity="0.13"/><rect x="505.10" y="334.78" width="4.12" height="1.6" fill="#000000" opacity="0.07"/><rect x="511.72" y="334.78" width="5.12" height="1.6" fill="#ffffff" opacity="0.13"/><rect x="519.34" y="334.78" width="4.12" height="1.6" fill="#000000" opacity="0.07"/><rect x="525.96" y="334.78" width="5.12" height="1.6" fill="#ffffff" opacity="0.13"/><rect x="533.58" y="334.78" width="25.48" height="1.6" fill="#000000" opacity="0.07"/><rect x="561.56" y="334.78" width="19.36" height="1.6" fill="#ffffff" opacity="0.13"/><rect x="469.00" y="346.34" width="40.72" height="1.6" fill="#ffffff" opacity="0.13"/><rect x="512.22" y="346.34" width="4.12" height="1.6" fill="#000000" opacity="0.07"/><rect x="518.84" y="346.34" width="5.12" height="1.6" fill="#ffffff" opacity="0.13"/><rect x="526.46" y="346.34" width="4.12" height="1.6" fill="#000000" opacity="0.07"/><rect x="533.08" y="346.34" width="47.84" height="1.6" fill="#ffffff" opacity="0.13"/><rect x="469.00" y="357.90" width="33.60" height="1.6" fill="#ffffff" opacity="0.13"/><rect x="505.10" y="357.90" width="4.12" height="1.6" fill="#000000" opacity="0.07"/><rect x="511.72" y="357.90" width="5.12" height="1.6" fill="#ffffff" opacity="0.13"/><rect x="519.34" y="357.90" width="4.12" height="1.6" fill="#000000" opacity="0.07"/><rect x="525.96" y="357.90" width="12.24" height="1.6" fill="#ffffff" opacity="0.13"/><rect x="540.70" y="357.90" width="11.24" height="1.6" fill="#000000" opacity="0.07"/><rect x="554.44" y="357.90" width="26.48" height="1.6" fill="#ffffff" opacity="0.13"/><rect x="469.50" y="369.46" width="4.12" height="1.6" fill="#000000" opacity="0.07"/><rect x="476.12" y="369.46" width="19.36" height="1.6" fill="#ffffff" opacity="0.13"/><rect x="497.98" y="369.46" width="4.12" height="1.6" fill="#000000" opacity="0.07"/><rect x="504.60" y="369.46" width="5.12" height="1.6" fill="#ffffff" opacity="0.13"/><rect x="512.22" y="369.46" width="4.12" height="1.6" fill="#000000" opacity="0.07"/><rect x="518.84" y="369.46" width="5.12" height="1.6" fill="#ffffff" opacity="0.13"/><rect x="526.46" y="369.46" width="4.12" height="1.6" fill="#000000" opacity="0.07"/><rect x="533.08" y="369.46" width="5.12" height="1.6" fill="#ffffff" opacity="0.13"/><rect x="540.70" y="369.46" width="11.24" height="1.6" fill="#000000" opacity="0.07"/><rect x="554.44" y="369.46" width="5.12" height="1.6" fill="#ffffff" opacity="0.13"/><rect x="562.06" y="369.46" width="4.12" height="1.6" fill="#000000" opacity="0.07"/><rect x="568.68" y="369.46" width="5.12" height="1.6" fill="#ffffff" opacity="0.13"/><rect x="576.30" y="369.46" width="4.12" height="1.6" fill="#000000" opacity="0.07"/><rect x="469.50" y="381.02" width="4.12" height="1.6" fill="#000000" opacity="0.07"/><rect x="476.12" y="381.02" width="26.48" height="1.6" fill="#ffffff" opacity="0.13"/><rect x="505.10" y="381.02" width="4.12" height="1.6" fill="#000000" opacity="0.07"/><rect x="511.72" y="381.02" width="19.36" height="1.6" fill="#ffffff" opacity="0.13"/><rect x="533.58" y="381.02" width="11.24" height="1.6" fill="#000000" opacity="0.07"/><rect x="547.32" y="381.02" width="5.12" height="1.6" fill="#ffffff" opacity="0.13"/><rect x="554.94" y="381.02" width="4.12" height="1.6" fill="#000000" opacity="0.07"/><rect x="561.56" y="381.02" width="19.36" height="1.6" fill="#ffffff" opacity="0.13"/><rect x="469.50" y="392.58" width="4.12" height="1.6" fill="#000000" opacity="0.07"/><rect x="476.12" y="392.58" width="26.48" height="1.6" fill="#ffffff" opacity="0.13"/><rect x="505.10" y="392.58" width="4.12" height="1.6" fill="#000000" opacity="0.07"/><rect x="511.72" y="392.58" width="5.12" height="1.6" fill="#ffffff" opacity="0.13"/><rect x="519.34" y="392.58" width="53.96" height="1.6" fill="#000000" opacity="0.07"/><rect x="575.80" y="392.58" width="5.12" height="1.6" fill="#ffffff" opacity="0.13"/><rect x="469.50" y="404.14" width="4.12" height="1.6" fill="#000000" opacity="0.07"/><rect x="476.12" y="404.14" width="26.48" height="1.6" fill="#ffffff" opacity="0.13"/><rect x="505.10" y="404.14" width="4.12" height="1.6" fill="#000000" opacity="0.07"/><rect x="511.72" y="404.14" width="5.12" height="1.6" fill="#ffffff" opacity="0.13"/><rect x="519.34" y="404.14" width="11.24" height="1.6" fill="#000000" opacity="0.07"/><rect x="533.08" y="404.14" width="5.12" height="1.6" fill="#ffffff" opacity="0.13"/><rect x="540.70" y="404.14" width="25.48" height="1.6" fill="#000000" opacity="0.07"/><rect x="568.68" y="404.14" width="5.12" height="1.6" fill="#ffffff" opacity="0.13"/><rect x="576.30" y="404.14" width="4.12" height="1.6" fill="#000000" opacity="0.07"/><rect x="469.50" y="415.70" width="4.12" height="1.6" fill="#000000" opacity="0.07"/><rect x="476.12" y="415.70" width="26.48" height="1.6" fill="#ffffff" opacity="0.13"/><rect x="505.10" y="415.70" width="4.12" height="1.6" fill="#000000" opacity="0.07"/><rect x="511.72" y="415.70" width="19.36" height="1.6" fill="#ffffff" opacity="0.13"/><rect x="533.58" y="415.70" width="25.48" height="1.6" fill="#000000" opacity="0.07"/><rect x="561.56" y="415.70" width="19.36" height="1.6" fill="#ffffff" opacity="0.13"/><rect x="469.50" y="427.26" width="4.12" height="1.6" fill="#000000" opacity="0.07"/><rect x="476.12" y="427.26" width="47.84" height="1.6" fill="#ffffff" opacity="0.13"/><rect x="526.46" y="427.26" width="4.12" height="1.6" fill="#000000" opacity="0.07"/><rect x="533.08" y="427.26" width="5.12" height="1.6" fill="#ffffff" opacity="0.13"/><rect x="540.70" y="427.26" width="11.24" height="1.6" fill="#000000" opacity="0.07"/><rect x="554.44" y="427.26" width="5.12" height="1.6" fill="#ffffff" opacity="0.13"/><rect x="562.06" y="427.26" width="18.36" height="1.6" fill="#000000" opacity="0.07"/><rect x="469.00" y="438.82" width="69.20" height="1.6" fill="#ffffff" opacity="0.13"/><rect x="540.70" y="438.82" width="4.12" height="1.6" fill="#000000" opacity="0.07"/><rect x="547.32" y="438.82" width="12.24" height="1.6" fill="#ffffff" opacity="0.13"/><rect x="562.06" y="438.82" width="11.24" height="1.6" fill="#000000" opacity="0.07"/><rect x="575.80" y="438.82" width="5.12" height="1.6" fill="#ffffff" opacity="0.13"/><rect x="469.50" y="450.38" width="4.12" height="1.6" fill="#000000" opacity="0.07"/><rect x="476.12" y="450.38" width="47.84" height="1.6" fill="#ffffff" opacity="0.13"/><rect x="526.46" y="450.38" width="4.12" height="1.6" fill="#000000" opacity="0.07"/><rect x="533.08" y="450.38" width="12.24" height="1.6" fill="#ffffff" opacity="0.13"/><rect x="547.82" y="450.38" width="4.12" height="1.6" fill="#000000" opacity="0.07"/><rect x="554.44" y="450.38" width="5.12" height="1.6" fill="#ffffff" opacity="0.13"/><rect x="562.06" y="450.38" width="4.12" height="1.6" fill="#000000" opacity="0.07"/><rect x="568.68" y="450.38" width="5.12" height="1.6" fill="#ffffff" opacity="0.13"/><rect x="576.30" y="450.38" width="4.12" height="1.6" fill="#000000" opacity="0.07"/><rect x="589.00" y="272.00" width="157.08" height="184.96" fill="#9467bd"/><rect x="603.28" y="272.00" width="7.19" height="11.61" fill="#ff9896"/><rect x="617.56" y="272.00" width="14.33" height="11.61" fill="#ff9896"/><rect x="631.84" y="272.00" width="14.33" height="11.61" fill="#8c564b"/><rect x="646.12" y="272.00" width="7.19" height="11.61" fill="#c5b0d5"/><rect x="667.54" y="272.00" width="7.19" height="11.61" fill="#c5b0d5"/><rect x="674.68" y="272.00" width="14.33" height="11.61" fill="#ff9896"/><rect x="688.96" y="272.00" width="14.33" height="11.61" fill="#c49c94"/><rect x="710.38" y="272.00" width="14.33" height="11.61" fill="#ff9896"/><rect x="724.66" y="272.00" width="14.33" height="11.61" fill="#8c564b"/><rect x="738.94" y="272.00" width="7.19" height="11.61" fill="#d62728"/><rect x="660.40" y="306.68" width="7.19" height="11.61" fill="#c5b0d5"/><rect x="696.10" y="306.68" width="14.33" height="11.61" fill="#c5b0d5"/><rect x="646.12" y="318.24" width="7.19" height="11.61" fill="#c5b0d5"/><rect x="667.54" y="318.24" width="7.19" height="11.61" fill="#c5b0d5"/><rect x="688.96" y="318.24" width="14.33" height="11.61" fill="#c5b0d5"/><rect x="738.94" y="318.24" width="7.19" height="11.61" fill="#d62728"/><rect x="596.14" y="341.36" width="7.19" height="11.61" fill="#17becf"/><rect x="603.28" y="341.36" width="7.19" height="11.61" fill="#ff9896"/><rect x="646.12" y="341.36" width="7.19" height="11.61" fill="#c5b0d5"/><rect x="738.94" y="341.36" width="7.19" height="11.61" fill="#d62728"/><rect x="738.94" y="352.92" width="7.19" height="11.61" fill="#ff9896"/><rect x="596.14" y="364.48" width="7.19" height="11.61" fill="#8c564b"/><rect x="603.28" y="364.48" width="7.19" height="11.61" fill="#ff7f0e"/><rect x="610.42" y="364.48" width="7.19" height="11.61" fill="#d62728"/><rect x="617.56" y="364.48" width="14.33" height="11.61" fill="#ffbb78"/><rect x="631.84" y="364.48" width="14.33" height="11.61" fill="#98df8a"/><rect x="646.12" y="364.48" width="7.19" height="11.61" fill="#c7c7c7"/><rect x="653.26" y="364.48" width="7.19" height="11.61" fill="#d62728"/><rect x="660.40" y="364.48" width="7.19" height="11.61" fill="#8c564b"/><rect x="667.54" y="364.48" width="7.19" height="11.61" fill="#2ca02c"/><rect x="674.68" y="364.48" width="14.33" height="11.61" fill="#c7c7c7"/><rect x="688.96" y="364.48" width="7.19" height="11.61" fill="#98df8a"/><rect x="696.10" y="364.48" width="7.19" height="11.61" fill="#d62728"/><rect x="710.38" y="364.48" width="14.33" height="11.61" fill="#ffbb78"/><rect x="724.66" y="364.48" width="14.33" height="11.61" fill="#98df8a"/><rect x="738.94" y="364.48" width="7.19" height="11.61" fill="#c49c94"/><rect x="738.94" y="387.60" width="7.19" height="11.61" fill="#ff9896"/><rect x="646.12" y="445.40" width="7.19" height="11.61" fill="#c5b0d5"/><rect x="590.00" y="276.98" width="12.28" height="1.6" fill="#ffffff" opacity="0.13"/><rect x="604.78" y="276.98" width="4.14" height="1.6" fill="#000000" opacity="0.07"/><rect x="611.42" y="276.98" width="5.14" height="1.6" fill="#ffffff" opacity="0.13"/><rect x="619.06" y="276.98" width="11.28" height="1.6" fill="#000000" opacity="0.07"/><rect x="632.84" y="276.98" width="12.28" height="1.6" fill="#ffffff" opacity="0.13"/><rect x="647.62" y="276.98" width="4.14" height="1.6" fill="#000000" opacity="0.07"/><rect x="654.26" y="276.98" width="12.28" height="1.6" fill="#ffffff" opacity="0.13"/><rect x="669.04" y="276.98" width="32.70" height="1.6" fill="#000000" opacity="0.07"/><rect x="704.24" y="276.98" width="5.14" height="1.6" fill="#ffffff" opacity="0.13"/><rect x="711.88" y="276.98" width="11.28" height="1.6" fill="#000000" opacity="0.07"/><rect x="725.66" y="276.98" width="19.42" height="1.6" fill="#ffffff" opacity="0.13"/><rect x="590.00" y="288.54" width="155.08" height="1.6" fill="#ffffff" opacity="0.13"/><rect x="590.00" y="300.10" width="155.08" height="1.6" fill="#ffffff" opacity="0.13"/><rect x="590.00" y="311.66" width="69.40" height="1.6" fill="#ffffff" opacity="0.13"/><rect x="661.90" y="311.66" width="4.14" height="1.6" fill="#000000" opacity="0.07"/><rect x="668.54" y="311.66" width="26.56" height="1.6" fill="#ffffff" opacity="0.13"/><rect x="697.60" y="311.66" width="11.28" height="1.6" fill="#000000" opacity="0.07"/><rect x="711.38" y="311.66" width="33.70" height="1.6" fill="#ffffff" opacity="0.13"/><rect x="590.00" y="323.22" width="55.12" height="1.6" fill="#ffffff" opacity="0.13"/><rect x="647.62" y="323.22" width="4.14" height="1.6" fill="#000000" opacity="0.07"/><rect x="654.26" y="323.22" width="12.28" height="1.6" fill="#ffffff" opacity="0.13"/><rect x="669.04" y="323.22" width="4.14" height="1.6" fill="#000000" opacity="0.07"/><rect x="675.68" y="323.22" width="12.28" height="1.6" fill="#ffffff" opacity="0.13"/><rect x="690.46" y="323.22" width="11.28" height="1.6" fill="#000000" opacity="0.07"/><rect x="704.24" y="323.22" width="40.84" height="1.6" fill="#ffffff" opacity="0.13"/><rect x="590.00" y="334.78" width="155.08" height="1.6" fill="#ffffff" opacity="0.13"/><rect x="590.00" y="346.34" width="12.28" height="1.6" fill="#ffffff" opacity="0.13"/><rect x="604.78" y="346.34" width="4.14" height="1.6" fill="#000000" opacity="0.07"/><rect x="611.42" y="346.34" width="33.70" height="1.6" fill="#ffffff" opacity="0.13"/><rect x="647.62" y="346.34" width="4.14" height="1.6" fill="#000000" opacity="0.07"/><rect x="654.26" y="346.34" width="90.82" height="1.6" fill="#ffffff" opacity="0.13"/><rect x="590.00" y="357.90" width="147.94" height="1.6" fill="#ffffff" opacity="0.13"/><rect x="740.44" y="357.90" width="4.14" height="1.6" fill="#000000" opacity="0.07"/><rect x="590.00" y="369.46" width="26.56" height="1.6" fill="#ffffff" opacity="0.13"/><rect x="619.06" y="369.46" width="32.70" height="1.6" fill="#000000" opacity="0.07"/><rect x="654.26" y="369.46" width="19.42" height="1.6" fill="#ffffff" opacity="0.13"/><rect x="676.18" y="369.46" width="18.42" height="1.6" fill="#000000" opacity="0.07"/><rect x="697.10" y="369.46" width="12.28" height="1.6" fill="#ffffff" opacity="0.13"/><rect x="711.88" y="369.46" width="32.70" height="1.6" fill="#000000" opacity="0.07"/><rect x="590.00" y="381.02" width="155.08" height="1.6" fill="#ffffff" opacity="0.13"/><rect x="590.00" y="392.58" width="147.94" height="1.6" fill="#ffffff" opacity="0.13"/><rect x="740.44" y="392.58" width="4.14" height="1.6" fill="#000000" opacity="0.07"/><rect x="590.00" y="404.14" width="155.08" height="1.6" fill="#ffffff" opacity="0.13"/><rect x="590.00" y="415.70" width="155.08" height="1.6" fill="#ffffff" opacity="0.13"/><rect x="590.00" y="427.26" width="155.08" height="1.6" fill="#ffffff" opacity="0.13"/><rect x="590.00" y="438.82" width="155.08" height="1.6" fill="#ffffff" opacity="0.13"/><rect x="590.00" y="450.38" width="55.12" height="1.6" fill="#ffffff" opacity="0.13"/><rect x="647.62" y="450.38" width="4.14" height="1.6" fill="#000000" opacity="0.07"/><rect x="654.26" y="450.38" width="90.82" height="1.6" fill="#ffffff" opacity="0.13"/><rect x="468.00" y="469.00" width="113.92" height="254.32" fill="#9467bd"/><rect x="510.72" y="480.56" width="7.17" height="11.61" fill="#17becf"/><rect x="524.96" y="480.56" width="7.17" height="11.61" fill="#8c564b"/><rect x="468.00" y="492.12" width="7.17" height="11.61" fill="#ff9896"/><rect x="510.72" y="492.12" width="7.17" height="11.61" fill="#ff9896"/><rect x="524.96" y="492.12" width="7.17" height="11.61" fill="#ff7f0e"/><rect x="524.96" y="503.68" width="7.17" height="11.61" fill="#d62728"/><rect x="468.00" y="515.24" width="7.17" height="11.61" fill="#ff9896"/><rect x="524.96" y="515.24" width="7.17" height="11.61" fill="#ffbb78"/><rect x="468.00" y="526.80" width="7.17" height="11.61" fill="#ff9896"/><rect x="524.96" y="526.80" width="7.17" height="11.61" fill="#ffbb78"/><rect x="468.00" y="538.36" width="7.17" height="11.61" fill="#8c564b"/><rect x="524.96" y="538.36" width="7.17" height="11.61" fill="#98df8a"/><rect x="468.00" y="549.92" width="7.17" height="11.61" fill="#8c564b"/><rect x="524.96" y="549.92" width="7.17" height="11.61" fill="#98df8a"/><rect x="468.00" y="561.48" width="7.17" height="11.61" fill="#c5b0d5"/><rect x="496.48" y="561.48" width="7.17" height="11.61" fill="#c5b0d5"/><rect x="510.72" y="561.48" width="7.17" height="11.61" fill="#c5b0d5"/><rect x="524.96" y="561.48" width="7.17" height="11.61" fill="#c7c7c7"/><rect x="574.80" y="561.48" width="7.17" height="11.61" fill="#c5b0d5"/><rect x="524.96" y="573.04" width="7.17" height="11.61" fill="#d62728"/><rect x="489.36" y="584.60" width="7.17" height="11.61" fill="#c5b0d5"/><rect x="524.96" y="584.60" width="7.17" height="11.61" fill="#8c564b"/><rect x="468.00" y="596.16" width="7.17" height="11.61" fill="#c5b0d5"/><rect x="496.48" y="596.16" width="7.17" height="11.61" fill="#c5b0d5"/><rect x="524.96" y="596.16" width="7.17" height="11.61" fill="#2ca02c"/><rect x="468.00" y="607.72" width="7.17" height="11.61" fill="#ff9896"/><rect x="524.96" y="607.72" width="7.17" height="11.61" fill="#c7c7c7"/><rect x="468.00" y="619.28" width="7.17" height="11.61" fill="#ff9896"/><rect x="524.96" y="619.28" width="7.17" height="11.61" fill="#c7c7c7"/><rect x="468.00" y="630.84" width="7.17" height="11.61" fill="#c49c94"/><rect x="496.48" y="630.84" width="7.17" height="11.61" fill="#c5b0d5"/><rect x="524.96" y="630.84" width="7.17" height="11.61" fill="#98df8a"/><rect x="468.00" y="642.40" width="7.17" height="11.61" fill="#c49c94"/><rect x="489.36" y="642.40" width="14.29" height="11.61" fill="#c5b0d5"/><rect x="524.96" y="642.40" width="7.17" height="11.61" fill="#d62728"/><rect x="489.36" y="653.96" width="7.17" height="11.61" fill="#c5b0d5"/><rect x="468.00" y="665.52" width="7.17" height="11.61" fill="#ff9896"/><rect x="524.96" y="665.52" width="7.17" height="11.61" fill="#ffbb78"/><rect x="468.00" y="677.08" width="7.17" height="11.61" fill="#ff9896"/><rect x="524.96" y="677.08" width="7.17" height="11.61" fill="#ffbb78"/><rect x="468.00" y="688.64" width="7.17" height="11.61" fill="#8c564b"/><rect x="524.96" y="688.64" width="7.17" height="11.61" fill="#98df8a"/><rect x="468.00" y="700.20" width="7.17" height="11.61" fill="#8c564b"/><rect x="524.96" y="700.20" width="7.17" height="11.61" fill="#98df8a"/><rect x="468.00" y="711.76" width="7.17" height="11.61" fill="#d62728"/><rect x="496.48" y="711.76" width="7.17" height="11.61" fill="#d62728"/><rect x="510.72" y="711.76" width="7.17" height="11.61" fill="#d62728"/><rect x="517.84" y="711.76" width="7.17" height="11.61" fill="#ff9896"/><rect x="524.96" y="711.76" width="7.17" height="11.61" fill="#c49c94"/><rect x="539.20" y="711.76" width="7.17" height="11.61" fill="#ff9896"/><rect x="469.00" y="473.98" width="111.92" height="1.6" fill="#ffffff" opacity="0.13"/><rect x="469.00" y="485.54" width="111.92" height="1.6" fill="#ffffff" opacity="0.13"/><rect x="469.50" y="497.10" width="4.12" height="1.6" fill="#000000" opacity="0.07"/><rect x="476.12" y="497.10" width="33.60" height="1.6" fill="#ffffff" opacity="0.13"/><rect x="512.22" y="497.10" width="4.12" height="1.6" fill="#000000" opacity="0.07"/><rect x="518.84" y="497.10" width="62.08" height="1.6" fill="#ffffff" opacity="0.13"/><rect x="469.00" y="508.66" width="111.92" height="1.6" fill="#ffffff" opacity="0.13"/><rect x="469.50" y="520.22" width="4.12" height="1.6" fill="#000000" opacity="0.07"/><rect x="476.12" y="520.22" width="47.84" height="1.6" fill="#ffffff" opacity="0.13"/><rect x="526.46" y="520.22" width="4.12" height="1.6" fill="#000000" opacity="0.07"/><rect x="533.08" y="520.22" width="47.84" height="1.6" fill="#ffffff" opacity="0.13"/><rect x="469.50" y="531.78" width="4.12" height="1.6" fill="#000000" opacity="0.07"/><rect x="476.12" y="531.78" width="47.84" height="1.6" fill="#ffffff" opacity="0.13"/><rect x="526.46" y="531.78" width="4.12" height="1.6" fill="#000000" opacity="0.07"/><rect x="533.08" y="531.78" width="47.84" height="1.6" fill="#ffffff" opacity="0.13"/><rect x="469.00" y="543.34" width="54.96" height="1.6" fill="#ffffff" opacity="0.13"/><rect x="526.46" y="543.34" width="4.12" height="1.6" fill="#000000" opacity="0.07"/><rect x="533.08" y="543.34" width="47.84" height="1.6" fill="#ffffff" opacity="0.13"/><rect x="469.00" y="554.90" width="54.96" height="1.6" fill="#ffffff" opacity="0.13"/><rect x="526.46" y="554.90" width="4.12" height="1.6" fill="#000000" opacity="0.07"/><rect x="533.08" y="554.90" width="47.84" height="1.6" fill="#ffffff" opacity="0.13"/><rect x="469.50" y="566.46" width="4.12" height="1.6" fill="#000000" opacity="0.07"/><rect x="476.12" y="566.46" width="19.36" height="1.6" fill="#ffffff" opacity="0.13"/><rect x="497.98" y="566.46" width="4.12" height="1.6" fill="#000000" opacity="0.07"/><rect x="504.60" y="566.46" width="5.12" height="1.6" fill="#ffffff" opacity="0.13"/><rect x="512.22" y="566.46" width="4.12" height="1.6" fill="#000000" opacity="0.07"/><rect x="518.84" y="566.46" width="5.12" height="1.6" fill="#ffffff" opacity="0.13"/><rect x="526.46" y="566.46" width="4.12" height="1.6" fill="#000000" opacity="0.07"/><rect x="533.08" y="566.46" width="40.72" height="1.6" fill="#ffffff" opacity="0.13"/><rect x="576.30" y="566.46" width="4.12" height="1.6" fill="#000000" opacity="0.07"/><rect x="469.00" y="578.02" width="111.92" height="1.6" fill="#ffffff" opacity="0.13"/><rect x="469.00" y="589.58" width="19.36" height="1.6" fill="#ffffff" opacity="0.13"/><rect x="490.86" y="589.58" width="4.12" height="1.6" fill="#000000" opacity="0.07"/><rect x="497.48" y="589.58" width="83.44" height="1.6" fill="#ffffff" opacity="0.13"/><rect x="469.50" y="601.14" width="4.12" height="1.6" fill="#000000" opacity="0.07"/><rect x="476.12" y="601.14" width="19.36" height="1.6" fill="#ffffff" opacity="0.13"/><rect x="497.98" y="601.14" width="4.12" height="1.6" fill="#000000" opacity="0.07"/><rect x="504.60" y="601.14" width="76.32" height="1.6" fill="#ffffff" opacity="0.13"/><rect x="469.50" y="612.70" width="4.12" height="1.6" fill="#000000" opacity="0.07"/><rect x="476.12" y="612.70" width="47.84" height="1.6" fill="#ffffff" opacity="0.13"/><rect x="526.46" y="612.70" width="4.12" height="1.6" fill="#000000" opacity="0.07"/><rect x="533.08" y="612.70" width="47.84" height="1.6" fill="#ffffff" opacity="0.13"/><rect x="469.50" y="624.26" width="4.12" height="1.6" fill="#000000" opacity="0.07"/><rect x="476.12" y="624.26" width="47.84" height="1.6" fill="#ffffff" opacity="0.13"/><rect x="526.46" y="624.26" width="4.12" height="1.6" fill="#000000" opacity="0.07"/><rect x="533.08" y="624.26" width="47.84" height="1.6" fill="#ffffff" opacity="0.13"/><rect x="469.50" y="635.82" width="4.12" height="1.6" fill="#000000" opacity="0.07"/><rect x="476.12" y="635.82" width="19.36" height="1.6" fill="#ffffff" opacity="0.13"/><rect x="497.98" y="635.82" width="4.12" height="1.6" fill="#000000" opacity="0.07"/><rect x="504.60" y="635.82" width="19.36" height="1.6" fill="#ffffff" opacity="0.13"/><rect x="526.46" y="635.82" width="4.12" height="1.6" fill="#000000" opacity="0.07"/><rect x="533.08" y="635.82" width="47.84" height="1.6" fill="#ffffff" opacity="0.13"/><rect x="469.50" y="647.38" width="4.12" height="1.6" fill="#000000" opacity="0.07"/><rect x="476.12" y="647.38" width="12.24" height="1.6" fill="#ffffff" opacity="0.13"/><rect x="490.86" y="647.38" width="11.24" height="1.6" fill="#000000" opacity="0.07"/><rect x="504.60" y="647.38" width="76.32" height="1.6" fill="#ffffff" opacity="0.13"/><rect x="469.00" y="658.94" width="19.36" height="1.6" fill="#ffffff" opacity="0.13"/><rect x="490.86" y="658.94" width="4.12" height="1.6" fill="#000000" opacity="0.07"/><rect x="497.48" y="658.94" width="83.44" height="1.6" fill="#ffffff" opacity="0.13"/><rect x="469.50" y="670.50" width="4.12" height="1.6" fill="#000000" opacity="0.07"/><rect x="476.12" y="670.50" width="47.84" height="1.6" fill="#ffffff" opacity="0.13"/><rect x="526.46" y="670.50" width="4.12" height="1.6" fill="#000000" opacity="0.07"/><rect x="533.08" y="670.50" width="47.84" height="1.6" fill="#ffffff" opacity="0.13"/><rect x="469.50" y="682.06" width="4.12" height="1.6" fill="#000000" opacity="0.07"/><rect x="476.12" y="682.06" width="47.84" height="1.6" fill="#ffffff" opacity="0.13"/><rect x="526.46" y="682.06" width="4.12" height="1.6" fill="#000000" opacity="0.07"/><rect x="533.08" y="682.06" width="47.84" height="1.6" fill="#ffffff" opacity="0.13"/><rect x="469.00" y="693.62" width="54.96" height="1.6" fill="#ffffff" opacity="0.13"/><rect x="526.46" y="693.62" width="4.12" height="1.6" fill="#000000" opacity="0.07"/><rect x="533.08" y="693.62" width="47.84" height="1.6" fill="#ffffff" opacity="0.13"/><rect x="469.00" y="705.18" width="54.96" height="1.6" fill="#ffffff" opacity="0.13"/><rect x="526.46" y="705.18" width="4.12" height="1.6" fill="#000000" opacity="0.07"/><rect x="533.08" y="705.18" width="47.84" height="1.6" fill="#ffffff" opacity="0.13"/><rect x="469.00" y="716.74" width="47.84" height="1.6" fill="#ffffff" opacity="0.13"/><rect x="519.34" y="716.74" width="11.24" height="1.6" fill="#000000" opacity="0.07"/><rect x="533.08" y="716.74" width="5.12" height="1.6" fill="#ffffff" opacity="0.13"/><rect x="540.70" y="716.74" width="4.12" height="1.6" fill="#000000" opacity="0.07"/><rect x="547.32" y="716.74" width="33.60" height="1.6" fill="#ffffff" opacity="0.13"/><rect x="589.00" y="469.00" width="157.08" height="254.32" fill="#9467bd"/><rect x="589.00" y="469.00" width="7.19" height="11.61" fill="#9edae5"/><rect x="596.14" y="480.56" width="7.19" height="11.61" fill="#9edae5"/><rect x="603.28" y="480.56" width="7.19" height="11.61" fill="#ff9896"/><rect x="617.56" y="480.56" width="14.33" height="11.61" fill="#ff9896"/><rect x="646.12" y="480.56" width="7.19" height="11.61" fill="#c5b0d5"/><rect x="674.68" y="480.56" width="7.19" height="11.61" fill="#ff9896"/><rect x="710.38" y="480.56" width="14.33" height="11.61" fill="#ff9896"/><rect x="738.94" y="480.56" width="7.19" height="11.61" fill="#ff9896"/><rect x="596.14" y="492.12" width="7.19" height="11.61" fill="#ff9896"/><rect x="603.28" y="492.12" width="7.19" height="11.61" fill="#9edae5"/><rect x="610.42" y="492.12" width="7.19" height="11.61" fill="#7f7f7f"/><rect x="617.56" y="492.12" width="14.33" height="11.61" fill="#f7b6d2"/><rect x="631.84" y="492.12" width="14.33" height="11.61" fill="#8c564b"/><rect x="646.12" y="492.12" width="7.19" height="11.61" fill="#aec7e8"/><rect x="653.26" y="492.12" width="7.19" height="11.61" fill="#c49c94"/><rect x="660.40" y="492.12" width="7.19" height="11.61" fill="#98df8a"/><rect x="667.54" y="492.12" width="7.19" height="11.61" fill="#f7b6d2"/><rect x="674.68" y="492.12" width="7.19" height="11.61" fill="#2ca02c"/><rect x="681.82" y="492.12" width="7.19" height="11.61" fill="#ffbb78"/><rect x="688.96" y="492.12" width="7.19" height="11.61" fill="#8c564b"/><rect x="696.10" y="492.12" width="7.19" height="11.61" fill="#ff9896"/><rect x="703.24" y="492.12" width="7.19" height="11.61" fill="#d62728"/><rect x="710.38" y="492.12" width="14.33" height="11.61" fill="#f7b6d2"/><rect x="724.66" y="492.12" width="14.33" height="11.61" fill="#8c564b"/><rect x="603.28" y="503.68" width="7.19" height="11.61" fill="#7f7f7f"/><rect x="610.42" y="503.68" width="7.19" height="11.61" fill="#9edae5"/><rect x="617.56" y="503.68" width="7.19" height="11.61" fill="#d62728"/><rect x="624.70" y="503.68" width="21.47" height="11.61" fill="#ff9896"/><rect x="646.12" y="503.68" width="7.19" height="11.61" fill="#8c564b"/><rect x="653.26" y="503.68" width="14.33" height="11.61" fill="#ff9896"/><rect x="667.54" y="503.68" width="21.47" height="11.61" fill="#8c564b"/><rect x="688.96" y="503.68" width="7.19" height="11.61" fill="#ff9896"/><rect x="696.10" y="503.68" width="7.19" height="11.61" fill="#8c564b"/><rect x="710.38" y="503.68" width="35.75" height="11.61" fill="#ff9896"/><rect x="596.14" y="515.24" width="7.19" height="11.61" fill="#ff9896"/><rect x="603.28" y="515.24" width="7.19" height="11.61" fill="#f7b6d2"/><rect x="610.42" y="515.24" width="7.19" height="11.61" fill="#d62728"/><rect x="617.56" y="515.24" width="14.33" height="11.61" fill="#9edae5"/><rect x="631.84" y="515.24" width="14.33" height="11.61" fill="#d62728"/><rect x="646.12" y="515.24" width="7.19" height="11.61" fill="#1f77b4"/><rect x="653.26" y="515.24" width="7.19" height="11.61" fill="#c5b0d5"/><rect x="660.40" y="515.24" width="7.19" height="11.61" fill="#d62728"/><rect x="667.54" y="515.24" width="7.19" height="11.61" fill="#f7b6d2"/><rect x="674.68" y="515.24" width="7.19" height="11.61" fill="#ff7f0e"/><rect x="681.82" y="515.24" width="7.19" height="11.61" fill="#aec7e8"/><rect x="696.10" y="515.24" width="7.19" height="11.61" fill="#98df8a"/><rect x="703.24" y="515.24" width="7.19" height="11.61" fill="#d62728"/><rect x="710.38" y="515.24" width="14.33" height="11.61" fill="#9edae5"/><rect x="724.66" y="515.24" width="14.33" height="11.61" fill="#d62728"/><rect x="596.14" y="526.80" width="7.19" height="11.61" fill="#ff9896"/><rect x="603.28" y="526.80" width="7.19" height="11.61" fill="#f7b6d2"/><rect x="610.42" y="526.80" width="7.19" height="11.61" fill="#ff9896"/><rect x="617.56" y="526.80" width="14.33" height="11.61" fill="#9edae5"/><rect x="631.84" y="526.80" width="14.33" height="11.61" fill="#d62728"/><rect x="646.12" y="526.80" width="7.19" height="11.61" fill="#1f77b4"/><rect x="653.26" y="526.80" width="7.19" height="11.61" fill="#c5b0d5"/><rect x="660.40" y="526.80" width="7.19" height="11.61" fill="#d62728"/><rect x="667.54" y="526.80" width="7.19" height="11.61" fill="#f7b6d2"/><rect x="674.68" y="526.80" width="7.19" height="11.61" fill="#ff7f0e"/><rect x="681.82" y="526.80" width="7.19" height="11.61" fill="#aec7e8"/><rect x="696.10" y="526.80" width="7.19" height="11.61" fill="#98df8a"/><rect x="703.24" y="526.80" width="7.19" height="11.61" fill="#d62728"/><rect x="710.38" y="526.80" width="14.33" height="11.61" fill="#9edae5"/><rect x="724.66" y="526.80" width="14.33" height="11.61" fill="#d62728"/><rect x="603.28" y="538.36" width="7.19" height="11.61" fill="#8c564b"/><rect x="610.42" y="538.36" width="7.19" height="11.61" fill="#ff9896"/><rect x="617.56" y="538.36" width="14.33" height="11.61" fill="#d62728"/><rect x="631.84" y="538.36" width="14.33" height="11.61" fill="#9edae5"/><rect x="646.12" y="538.36" width="7.19" height="11.61" fill="#d62728"/><rect x="653.26" y="538.36" width="7.19" height="11.61" fill="#c49c94"/><rect x="660.40" y="538.36" width="7.19" height="11.61" fill="#ff9896"/><rect x="667.54" y="538.36" width="7.19" height="11.61" fill="#c5b0d5"/><rect x="674.68" y="538.36" width="14.33" height="11.61" fill="#98df8a"/><rect x="688.96" y="538.36" width="7.19" height="11.61" fill="#e377c2"/><rect x="696.10" y="538.36" width="14.33" height="11.61" fill="#c5b0d5"/><rect x="710.38" y="538.36" width="14.33" height="11.61" fill="#d62728"/><rect x="724.66" y="538.36" width="14.33" height="11.61" fill="#9edae5"/><rect x="738.94" y="538.36" width="7.19" height="11.61" fill="#ff9896"/><rect x="603.28" y="549.92" width="7.19" height="11.61" fill="#8c564b"/><rect x="610.42" y="549.92" width="7.19" height="11.61" fill="#ff9896"/><rect x="617.56" y="549.92" width="14.33" height="11.61" fill="#d62728"/><rect x="631.84" y="549.92" width="14.33" height="11.61" fill="#9edae5"/><rect x="646.12" y="549.92" width="7.19" height="11.61" fill="#d62728"/><rect x="653.26" y="549.92" width="7.19" height="11.61" fill="#c49c94"/><rect x="660.40" y="549.92" width="7.19" height="11.61" fill="#ff9896"/><rect x="667.54" y="549.92" width="7.19" height="11.61" fill="#c5b0d5"/><rect x="674.68" y="549.92" width="14.33" height="11.61" fill="#98df8a"/><rect x="688.96" y="549.92" width="7.19" height="11.61" fill="#e377c2"/><rect x="696.10" y="549.92" width="14.33" height="11.61" fill="#c5b0d5"/><rect x="710.38" y="549.92" width="14.33" height="11.61" fill="#d62728"/><rect x="724.66" y="549.92" width="14.33" height="11.61" fill="#9edae5"/><rect x="738.94" y="549.92" width="7.19" height="11.61" fill="#ff9896"/><rect x="596.14" y="561.48" width="7.19" height="11.61" fill="#c5b0d5"/><rect x="603.28" y="561.48" width="7.19" height="11.61" fill="#aec7e8"/><rect x="610.42" y="561.48" width="7.19" height="11.61" fill="#8c564b"/><rect x="617.56" y="561.48" width="14.33" height="11.61" fill="#1f77b4"/><rect x="631.84" y="561.48" width="14.33" height="11.61" fill="#d62728"/><rect x="646.12" y="561.48" width="7.19" height="11.61" fill="#9edae5"/><rect x="653.26" y="561.48" width="7.19" height="11.61" fill="#2ca02c"/><rect x="660.40" y="561.48" width="7.19" height="11.61" fill="#c49c94"/><rect x="667.54" y="561.48" width="7.19" height="11.61" fill="#ff7f0e"/><rect x="674.68" y="561.48" width="7.19" height="11.61" fill="#bcbd22"/><rect x="681.82" y="561.48" width="7.19" height="11.61" fill="#dbdb8d"/><rect x="688.96" y="561.48" width="7.19" height="11.61" fill="#d62728"/><rect x="696.10" y="561.48" width="14.33" height="11.61" fill="#c49c94"/><rect x="710.38" y="561.48" width="14.33" height="11.61" fill="#1f77b4"/><rect x="724.66" y="561.48" width="14.33" height="11.61" fill="#d62728"/><rect x="603.28" y="573.04" width="7.19" height="11.61" fill="#c49c94"/><rect x="610.42" y="573.04" width="7.19" height="11.61" fill="#ff9896"/><rect x="617.56" y="573.04" width="14.33" height="11.61" fill="#c5b0d5"/><rect x="631.84" y="573.04" width="14.33" height="11.61" fill="#c49c94"/><rect x="646.12" y="573.04" width="7.19" height="11.61" fill="#2ca02c"/><rect x="653.26" y="573.04" width="7.19" height="11.61" fill="#9edae5"/><rect x="660.40" y="573.04" width="7.19" height="11.61" fill="#ff9896"/><rect x="667.54" y="573.04" width="7.19" height="11.61" fill="#8c564b"/><rect x="674.68" y="573.04" width="7.19" height="11.61" fill="#98df8a"/><rect x="681.82" y="573.04" width="7.19" height="11.61" fill="#2ca02c"/><rect x="688.96" y="573.04" width="7.19" height="11.61" fill="#7f7f7f"/><rect x="703.24" y="573.04" width="7.19" height="11.61" fill="#ff9896"/><rect x="710.38" y="573.04" width="14.33" height="11.61" fill="#c5b0d5"/><rect x="724.66" y="573.04" width="14.33" height="11.61" fill="#c49c94"/><rect x="603.28" y="584.60" width="7.19" height="11.61" fill="#98df8a"/><rect x="610.42" y="584.60" width="7.19" height="11.61" fill="#ff9896"/><rect x="617.56" y="584.60" width="14.33" height="11.61" fill="#d62728"/><rect x="631.84" y="584.60" width="14.33" height="11.61" fill="#ff9896"/><rect x="646.12" y="584.60" width="7.19" height="11.61" fill="#c49c94"/><rect x="653.26" y="584.60" width="7.19" height="11.61" fill="#ff9896"/><rect x="660.40" y="584.60" width="7.19" height="11.61" fill="#9edae5"/><rect x="667.54" y="584.60" width="7.19" height="11.61" fill="#2ca02c"/><rect x="674.68" y="584.60" width="7.19" height="11.61" fill="#8c564b"/><rect x="681.82" y="584.60" width="7.19" height="11.61" fill="#c49c94"/><rect x="688.96" y="584.60" width="7.19" height="11.61" fill="#ff9896"/><rect x="696.10" y="584.60" width="7.19" height="11.61" fill="#c49c94"/><rect x="703.24" y="584.60" width="7.19" height="11.61" fill="#e377c2"/><rect x="710.38" y="584.60" width="14.33" height="11.61" fill="#d62728"/><rect x="724.66" y="584.60" width="14.33" height="11.61" fill="#ff9896"/><rect x="603.28" y="596.16" width="7.19" height="11.61" fill="#f7b6d2"/><rect x="610.42" y="596.16" width="7.19" height="11.61" fill="#8c564b"/><rect x="617.56" y="596.16" width="14.33" height="11.61" fill="#f7b6d2"/><rect x="631.84" y="596.16" width="14.33" height="11.61" fill="#c5b0d5"/><rect x="646.12" y="596.16" width="7.19" height="11.61" fill="#ff7f0e"/><rect x="653.26" y="596.16" width="7.19" height="11.61" fill="#8c564b"/><rect x="660.40" y="596.16" width="7.19" height="11.61" fill="#2ca02c"/><rect x="667.54" y="596.16" width="7.19" height="11.61" fill="#9edae5"/><rect x="674.68" y="596.16" width="7.19" height="11.61" fill="#98df8a"/><rect x="681.82" y="596.16" width="7.19" height="11.61" fill="#ff7f0e"/><rect x="688.96" y="596.16" width="7.19" height="11.61" fill="#8c564b"/><rect x="696.10" y="596.16" width="7.19" height="11.61" fill="#98df8a"/><rect x="703.24" y="596.16" width="7.19" height="11.61" fill="#ffbb78"/><rect x="710.38" y="596.16" width="14.33" height="11.61" fill="#f7b6d2"/><rect x="724.66" y="596.16" width="14.33" height="11.61" fill="#c5b0d5"/><rect x="596.14" y="607.72" width="7.19" height="11.61" fill="#ff9896"/><rect x="603.28" y="607.72" width="7.19" height="11.61" fill="#2ca02c"/><rect x="610.42" y="607.72" width="7.19" height="11.61" fill="#8c564b"/><rect x="617.56" y="607.72" width="14.33" height="11.61" fill="#ff7f0e"/><rect x="631.84" y="607.72" width="14.33" height="11.61" fill="#98df8a"/><rect x="646.12" y="607.72" width="7.19" height="11.61" fill="#bcbd22"/><rect x="653.26" y="607.72" width="7.19" height="11.61" fill="#98df8a"/><rect x="660.40" y="607.72" width="7.19" height="11.61" fill="#8c564b"/><rect x="667.54" y="607.72" width="7.19" height="11.61" fill="#98df8a"/><rect x="674.68" y="607.72" width="7.19" height="11.61" fill="#9edae5"/><rect x="681.82" y="607.72" width="7.19" height="11.61" fill="#17becf"/><rect x="688.96" y="607.72" width="7.19" height="11.61" fill="#2ca02c"/><rect x="696.10" y="607.72" width="7.19" height="11.61" fill="#ff9896"/><rect x="710.38" y="607.72" width="14.33" height="11.61" fill="#ff7f0e"/><rect x="724.66" y="607.72" width="14.33" height="11.61" fill="#98df8a"/><rect x="738.94" y="607.72" width="7.19" height="11.61" fill="#c49c94"/><rect x="603.28" y="619.28" width="7.19" height="11.61" fill="#ffbb78"/><rect x="610.42" y="619.28" width="7.19" height="11.61" fill="#8c564b"/><rect x="617.56" y="619.28" width="14.33" height="11.61" fill="#aec7e8"/><rect x="631.84" y="619.28" width="14.33" height="11.61" fill="#98df8a"/><rect x="646.12" y="619.28" width="7.19" height="11.61" fill="#dbdb8d"/><rect x="653.26" y="619.28" width="7.19" height="11.61" fill="#2ca02c"/><rect x="660.40" y="619.28" width="7.19" height="11.61" fill="#c49c94"/><rect x="667.54" y="619.28" width="7.19" height="11.61" fill="#ff7f0e"/><rect x="674.68" y="619.28" width="7.19" height="11.61" fill="#17becf"/><rect x="681.82" y="619.28" width="7.19" height="11.61" fill="#9edae5"/><rect x="688.96" y="619.28" width="7.19" height="11.61" fill="#ffbb78"/><rect x="696.10" y="619.28" width="14.33" height="11.61" fill="#8c564b"/><rect x="710.38" y="619.28" width="14.33" height="11.61" fill="#aec7e8"/><rect x="724.66" y="619.28" width="14.33" height="11.61" fill="#98df8a"/><rect x="738.94" y="619.28" width="7.19" height="11.61" fill="#8c564b"/><rect x="603.28" y="630.84" width="7.19" height="11.61" fill="#8c564b"/><rect x="610.42" y="630.84" width="7.19" height="11.61" fill="#ff9896"/><rect x="631.84" y="630.84" width="14.33" height="11.61" fill="#e377c2"/><rect x="646.12" y="630.84" width="7.19" height="11.61" fill="#d62728"/><rect x="653.26" y="630.84" width="7.19" height="11.61" fill="#7f7f7f"/><rect x="660.40" y="630.84" width="7.19" height="11.61" fill="#ff9896"/><rect x="667.54" y="630.84" width="7.19" height="11.61" fill="#8c564b"/><rect x="674.68" y="630.84" width="7.19" height="11.61" fill="#2ca02c"/><rect x="681.82" y="630.84" width="7.19" height="11.61" fill="#ffbb78"/><rect x="688.96" y="630.84" width="7.19" height="11.61" fill="#9edae5"/><rect x="696.10" y="630.84" width="7.19" height="11.61" fill="#c49c94"/><rect x="724.66" y="630.84" width="14.33" height="11.61" fill="#f7b6d2"/><rect x="738.94" y="630.84" width="7.19" height="11.61" fill="#d62728"/><rect x="603.28" y="642.40" width="7.19" height="11.61" fill="#ff9896"/><rect x="610.42" y="642.40" width="7.19" height="11.61" fill="#8c564b"/><rect x="617.56" y="642.40" width="14.33" height="11.61" fill="#98df8a"/><rect x="631.84" y="642.40" width="14.33" height="11.61" fill="#c5b0d5"/><rect x="646.12" y="642.40" width="7.19" height="11.61" fill="#c49c94"/><rect x="660.40" y="642.40" width="7.19" height="11.61" fill="#c49c94"/><rect x="667.54" y="642.40" width="7.19" height="11.61" fill="#98df8a"/><rect x="674.68" y="642.40" width="7.19" height="11.61" fill="#ff9896"/><rect x="681.82" y="642.40" width="7.19" height="11.61" fill="#8c564b"/><rect x="688.96" y="642.40" width="7.19" height="11.61" fill="#c49c94"/><rect x="696.10" y="642.40" width="7.19" height="11.61" fill="#9edae5"/><rect x="703.24" y="642.40" width="7.19" height="11.61" fill="#f7b6d2"/><rect x="710.38" y="642.40" width="14.33" height="11.61" fill="#98df8a"/><rect x="724.66" y="642.40" width="7.19" height="11.61" fill="#c5b0d5"/><rect x="738.94" y="642.40" width="7.19" height="11.61" fill="#2ca02c"/><rect x="603.28" y="653.96" width="7.19" height="11.61" fill="#d62728"/><rect x="617.56" y="653.96" width="14.33" height="11.61" fill="#d62728"/><rect x="631.84" y="653.96" width="14.33" height="11.61" fill="#c5b0d5"/><rect x="646.12" y="653.96" width="7.19" height="11.61" fill="#c49c94"/><rect x="653.26" y="653.96" width="7.19" height="11.61" fill="#ff9896"/><rect x="660.40" y="653.96" width="7.19" height="11.61" fill="#e377c2"/><rect x="667.54" y="653.96" width="7.19" height="11.61" fill="#ffbb78"/><rect x="681.82" y="653.96" width="7.19" height="11.61" fill="#8c564b"/><rect x="696.10" y="653.96" width="7.19" height="11.61" fill="#f7b6d2"/><rect x="703.24" y="653.96" width="7.19" height="11.61" fill="#9edae5"/><rect x="710.38" y="653.96" width="14.33" height="11.61" fill="#d62728"/><rect x="724.66" y="653.96" width="14.33" height="11.61" fill="#c5b0d5"/><rect x="738.94" y="653.96" width="7.19" height="11.61" fill="#d62728"/><rect x="596.14" y="665.52" width="7.19" height="11.61" fill="#ff9896"/><rect x="603.28" y="665.52" width="7.19" height="11.61" fill="#f7b6d2"/><rect x="610.42" y="665.52" width="7.19" height="11.61" fill="#ff9896"/><rect x="617.56" y="665.52" width="14.33" height="11.61" fill="#9edae5"/><rect x="631.84" y="665.52" width="14.33" height="11.61" fill="#d62728"/><rect x="646.12" y="665.52" width="7.19" height="11.61" fill="#1f77b4"/><rect x="653.26" y="665.52" width="7.19" height="11.61" fill="#c5b0d5"/><rect x="660.40" y="665.52" width="7.19" height="11.61" fill="#d62728"/><rect x="667.54" y="665.52" width="7.19" height="11.61" fill="#f7b6d2"/><rect x="674.68" y="665.52" width="7.19" height="11.61" fill="#ff7f0e"/><rect x="681.82" y="665.52" width="7.19" height="11.61" fill="#aec7e8"/><rect x="696.10" y="665.52" width="7.19" height="11.61" fill="#98df8a"/><rect x="703.24" y="665.52" width="7.19" height="11.61" fill="#d62728"/><rect x="710.38" y="665.52" width="14.33" height="11.61" fill="#9edae5"/><rect x="724.66" y="665.52" width="14.33" height="11.61" fill="#d62728"/><rect x="596.14" y="677.08" width="7.19" height="11.61" fill="#ff9896"/><rect x="603.28" y="677.08" width="7.19" height="11.61" fill="#f7b6d2"/><rect x="610.42" y="677.08" width="7.19" height="11.61" fill="#ff9896"/><rect x="617.56" y="677.08" width="14.33" height="11.61" fill="#9edae5"/><rect x="631.84" y="677.08" width="14.33" height="11.61" fill="#d62728"/><rect x="646.12" y="677.08" width="7.19" height="11.61" fill="#1f77b4"/><rect x="653.26" y="677.08" width="7.19" height="11.61" fill="#c5b0d5"/><rect x="660.40" y="677.08" width="7.19" height="11.61" fill="#d62728"/><rect x="667.54" y="677.08" width="7.19" height="11.61" fill="#f7b6d2"/><rect x="674.68" y="677.08" width="7.19" height="11.61" fill="#ff7f0e"/><rect x="681.82" y="677.08" width="7.19" height="11.61" fill="#aec7e8"/><rect x="696.10" y="677.08" width="7.19" height="11.61" fill="#98df8a"/><rect x="703.24" y="677.08" width="7.19" height="11.61" fill="#d62728"/><rect x="710.38" y="677.08" width="14.33" height="11.61" fill="#9edae5"/><rect x="724.66" y="677.08" width="14.33" height="11.61" fill="#d62728"/><rect x="603.28" y="688.64" width="7.19" height="11.61" fill="#8c564b"/><rect x="610.42" y="688.64" width="7.19" height="11.61" fill="#ff9896"/><rect x="617.56" y="688.64" width="14.33" height="11.61" fill="#d62728"/><rect x="631.84" y="688.64" width="14.33" height="11.61" fill="#9edae5"/><rect x="646.12" y="688.64" width="7.19" height="11.61" fill="#d62728"/><rect x="653.26" y="688.64" width="7.19" height="11.61" fill="#c49c94"/><rect x="660.40" y="688.64" width="7.19" height="11.61" fill="#ff9896"/><rect x="667.54" y="688.64" width="7.19" height="11.61" fill="#c5b0d5"/><rect x="674.68" y="688.64" width="14.33" height="11.61" fill="#98df8a"/><rect x="688.96" y="688.64" width="7.19" height="11.61" fill="#f7b6d2"/><rect x="696.10" y="688.64" width="14.33" height="11.61" fill="#c5b0d5"/><rect x="710.38" y="688.64" width="14.33" height="11.61" fill="#d62728"/><rect x="724.66" y="688.64" width="14.33" height="11.61" fill="#9edae5"/><rect x="738.94" y="688.64" width="7.19" height="11.61" fill="#ff9896"/><rect x="603.28" y="700.20" width="7.19" height="11.61" fill="#8c564b"/><rect x="610.42" y="700.20" width="7.19" height="11.61" fill="#ff9896"/><rect x="617.56" y="700.20" width="14.33" height="11.61" fill="#d62728"/><rect x="631.84" y="700.20" width="14.33" height="11.61" fill="#9edae5"/><rect x="646.12" y="700.20" width="7.19" height="11.61" fill="#d62728"/><rect x="653.26" y="700.20" width="7.19" height="11.61" fill="#c49c94"/><rect x="660.40" y="700.20" width="7.19" height="11.61" fill="#ff9896"/><rect x="667.54" y="700.20" width="7.19" height="11.61" fill="#c5b0d5"/><rect x="674.68" y="700.20" width="14.33" height="11.61" fill="#98df8a"/><rect x="688.96" y="700.20" width="7.19" height="11.61" fill="#f7b6d2"/><rect x="703.24" y="700.20" width="7.19" height="11.61" fill="#c5b0d5"/><rect x="710.38" y="700.20" width="14.33" height="11.61" fill="#d62728"/><rect x="724.66" y="700.20" width="14.33" height="11.61" fill="#9edae5"/><rect x="738.94" y="700.20" width="7.19" height="11.61" fill="#ff9896"/><rect x="596.14" y="711.76" width="7.19" height="11.61" fill="#ff9896"/><rect x="610.42" y="711.76" width="7.19" height="11.61" fill="#ff9896"/><rect x="631.84" y="711.76" width="14.33" height="11.61" fill="#ff9896"/><rect x="674.68" y="711.76" width="7.19" height="11.61" fill="#c49c94"/><rect x="681.82" y="711.76" width="7.19" height="11.61" fill="#8c564b"/><rect x="688.96" y="711.76" width="7.19" height="11.61" fill="#d62728"/><rect x="696.10" y="711.76" width="7.19" height="11.61" fill="#2ca02c"/><rect x="703.24" y="711.76" width="7.19" height="11.61" fill="#d62728"/><rect x="724.66" y="711.76" width="14.33" height="11.61" fill="#ff9896"/><rect x="738.94" y="711.76" width="7.19" height="11.61" fill="#9edae5"/><rect x="590.50" y="473.98" width="4.14" height="1.6" fill="#000000" opacity="0.07"/><rect x="597.14" y="473.98" width="147.94" height="1.6" fill="#ffffff" opacity="0.13"/><rect x="590.00" y="485.54" width="5.14" height="1.6" fill="#ffffff" opacity="0.13"/><rect x="597.64" y="485.54" width="11.28" height="1.6" fill="#000000" opacity="0.07"/><rect x="611.42" y="485.54" width="5.14" height="1.6" fill="#ffffff" opacity="0.13"/><rect x="619.06" y="485.54" width="11.28" height="1.6" fill="#000000" opacity="0.07"/><rect x="632.84" y="485.54" width="12.28" height="1.6" fill="#ffffff" opacity="0.13"/><rect x="647.62" y="485.54" width="4.14" height="1.6" fill="#000000" opacity="0.07"/><rect x="654.26" y="485.54" width="19.42" height="1.6" fill="#ffffff" opacity="0.13"/><rect x="676.18" y="485.54" width="4.14" height="1.6" fill="#000000" opacity="0.07"/><rect x="682.82" y="485.54" width="26.56" height="1.6" fill="#ffffff" opacity="0.13"/><rect x="711.88" y="485.54" width="11.28" height="1.6" fill="#000000" opacity="0.07"/><rect x="725.66" y="485.54" width="12.28" height="1.6" fill="#ffffff" opacity="0.13"/><rect x="740.44" y="485.54" width="4.14" height="1.6" fill="#000000" opacity="0.07"/><rect x="590.00" y="497.10" width="5.14" height="1.6" fill="#ffffff" opacity="0.13"/><rect x="597.64" y="497.10" width="11.28" height="1.6" fill="#000000" opacity="0.07"/><rect x="611.42" y="497.10" width="5.14" height="1.6" fill="#ffffff" opacity="0.13"/><rect x="619.06" y="497.10" width="11.28" height="1.6" fill="#000000" opacity="0.07"/><rect x="632.84" y="497.10" width="12.28" height="1.6" fill="#ffffff" opacity="0.13"/><rect x="647.62" y="497.10" width="25.56" height="1.6" fill="#000000" opacity="0.07"/><rect x="675.68" y="497.10" width="5.14" height="1.6" fill="#ffffff" opacity="0.13"/><rect x="683.32" y="497.10" width="4.14" height="1.6" fill="#000000" opacity="0.07"/><rect x="689.96" y="497.10" width="5.14" height="1.6" fill="#ffffff" opacity="0.13"/><rect x="697.60" y="497.10" width="4.14" height="1.6" fill="#000000" opacity="0.07"/><rect x="704.24" y="497.10" width="5.14" height="1.6" fill="#ffffff" opacity="0.13"/><rect x="711.88" y="497.10" width="11.28" height="1.6" fill="#000000" opacity="0.07"/><rect x="725.66" y="497.10" width="19.42" height="1.6" fill="#ffffff" opacity="0.13"/><rect x="590.00" y="508.66" width="19.42" height="1.6" fill="#ffffff" opacity="0.13"/><rect x="611.92" y="508.66" width="4.14" height="1.6" fill="#000000" opacity="0.07"/><rect x="618.56" y="508.66" width="5.14" height="1.6" fill="#ffffff" opacity="0.13"/><rect x="626.20" y="508.66" width="18.42" height="1.6" fill="#000000" opacity="0.07"/><rect x="647.12" y="508.66" width="5.14" height="1.6" fill="#ffffff" opacity="0.13"/><rect x="654.76" y="508.66" width="11.28" height="1.6" fill="#000000" opacity="0.07"/><rect x="668.54" y="508.66" width="19.42" height="1.6" fill="#ffffff" opacity="0.13"/><rect x="690.46" y="508.66" width="4.14" height="1.6" fill="#000000" opacity="0.07"/><rect x="697.10" y="508.66" width="12.28" height="1.6" fill="#ffffff" opacity="0.13"/><rect x="711.88" y="508.66" width="32.70" height="1.6" fill="#000000" opacity="0.07"/><rect x="590.00" y="520.22" width="5.14" height="1.6" fill="#ffffff" opacity="0.13"/><rect x="597.64" y="520.22" width="11.28" height="1.6" fill="#000000" opacity="0.07"/><rect x="611.42" y="520.22" width="5.14" height="1.6" fill="#ffffff" opacity="0.13"/><rect x="619.06" y="520.22" width="11.28" height="1.6" fill="#000000" opacity="0.07"/><rect x="632.84" y="520.22" width="19.42" height="1.6" fill="#ffffff" opacity="0.13"/><rect x="654.76" y="520.22" width="4.14" height="1.6" fill="#000000" opacity="0.07"/><rect x="661.40" y="520.22" width="5.14" height="1.6" fill="#ffffff" opacity="0.13"/><rect x="669.04" y="520.22" width="4.14" height="1.6" fill="#000000" opacity="0.07"/><rect x="675.68" y="520.22" width="5.14" height="1.6" fill="#ffffff" opacity="0.13"/><rect x="683.32" y="520.22" width="4.14" height="1.6" fill="#000000" opacity="0.07"/><rect x="689.96" y="520.22" width="5.14" height="1.6" fill="#ffffff" opacity="0.13"/><rect x="697.60" y="520.22" width="4.14" height="1.6" fill="#000000" opacity="0.07"/><rect x="704.24" y="520.22" width="5.14" height="1.6" fill="#ffffff" opacity="0.13"/><rect x="711.88" y="520.22" width="11.28" height="1.6" fill="#000000" opacity="0.07"/><rect x="725.66" y="520.22" width="19.42" height="1.6" fill="#ffffff" opacity="0.13"/><rect x="590.00" y="531.78" width="5.14" height="1.6" fill="#ffffff" opacity="0.13"/><rect x="597.64" y="531.78" width="32.70" height="1.6" fill="#000000" opacity="0.07"/><rect x="632.84" y="531.78" width="19.42" height="1.6" fill="#ffffff" opacity="0.13"/><rect x="654.76" y="531.78" width="4.14" height="1.6" fill="#000000" opacity="0.07"/><rect x="661.40" y="531.78" width="5.14" height="1.6" fill="#ffffff" opacity="0.13"/><rect x="669.04" y="531.78" width="4.14" height="1.6" fill="#000000" opacity="0.07"/><rect x="675.68" y="531.78" width="5.14" height="1.6" fill="#ffffff" opacity="0.13"/><rect x="683.32" y="531.78" width="4.14" height="1.6" fill="#000000" opacity="0.07"/><rect x="689.96" y="531.78" width="5.14" height="1.6" fill="#ffffff" opacity="0.13"/><rect x="697.60" y="531.78" width="4.14" height="1.6" fill="#000000" opacity="0.07"/><rect x="704.24" y="531.78" width="5.14" height="1.6" fill="#ffffff" opacity="0.13"/><rect x="711.88" y="531.78" width="11.28" height="1.6" fill="#000000" opacity="0.07"/><rect x="725.66" y="531.78" width="19.42" height="1.6" fill="#ffffff" opacity="0.13"/><rect x="590.00" y="543.34" width="19.42" height="1.6" fill="#ffffff" opacity="0.13"/><rect x="611.92" y="543.34" width="4.14" height="1.6" fill="#000000" opacity="0.07"/><rect x="618.56" y="543.34" width="12.28" height="1.6" fill="#ffffff" opacity="0.13"/><rect x="633.34" y="543.34" width="11.28" height="1.6" fill="#000000" opacity="0.07"/><rect x="647.12" y="543.34" width="5.14" height="1.6" fill="#ffffff" opacity="0.13"/><rect x="654.76" y="543.34" width="32.70" height="1.6" fill="#000000" opacity="0.07"/><rect x="689.96" y="543.34" width="5.14" height="1.6" fill="#ffffff" opacity="0.13"/><rect x="697.60" y="543.34" width="11.28" height="1.6" fill="#000000" opacity="0.07"/><rect x="711.38" y="543.34" width="12.28" height="1.6" fill="#ffffff" opacity="0.13"/><rect x="726.16" y="543.34" width="18.42" height="1.6" fill="#000000" opacity="0.07"/><rect x="590.00" y="554.90" width="19.42" height="1.6" fill="#ffffff" opacity="0.13"/><rect x="611.92" y="554.90" width="4.14" height="1.6" fill="#000000" opacity="0.07"/><rect x="618.56" y="554.90" width="12.28" height="1.6" fill="#ffffff" opacity="0.13"/><rect x="633.34" y="554.90" width="11.28" height="1.6" fill="#000000" opacity="0.07"/><rect x="647.12" y="554.90" width="5.14" height="1.6" fill="#ffffff" opacity="0.13"/><rect x="654.76" y="554.90" width="32.70" height="1.6" fill="#000000" opacity="0.07"/><rect x="689.96" y="554.90" width="5.14" height="1.6" fill="#ffffff" opacity="0.13"/><rect x="697.60" y="554.90" width="11.28" height="1.6" fill="#000000" opacity="0.07"/><rect x="711.38" y="554.90" width="12.28" height="1.6" fill="#ffffff" opacity="0.13"/><rect x="726.16" y="554.90" width="18.42" height="1.6" fill="#000000" opacity="0.07"/><rect x="590.00" y="566.46" width="5.14" height="1.6" fill="#ffffff" opacity="0.13"/><rect x="597.64" y="566.46" width="11.28" height="1.6" fill="#000000" opacity="0.07"/><rect x="611.42" y="566.46" width="33.70" height="1.6" fill="#ffffff" opacity="0.13"/><rect x="647.62" y="566.46" width="4.14" height="1.6" fill="#000000" opacity="0.07"/><rect x="654.26" y="566.46" width="5.14" height="1.6" fill="#ffffff" opacity="0.13"/><rect x="661.90" y="566.46" width="4.14" height="1.6" fill="#000000" opacity="0.07"/><rect x="668.54" y="566.46" width="12.28" height="1.6" fill="#ffffff" opacity="0.13"/><rect x="683.32" y="566.46" width="4.14" height="1.6" fill="#000000" opacity="0.07"/><rect x="689.96" y="566.46" width="5.14" height="1.6" fill="#ffffff" opacity="0.13"/><rect x="697.60" y="566.46" width="11.28" height="1.6" fill="#000000" opacity="0.07"/><rect x="711.38" y="566.46" width="33.70" height="1.6" fill="#ffffff" opacity="0.13"/><rect x="590.00" y="578.02" width="12.28" height="1.6" fill="#ffffff" opacity="0.13"/><rect x="604.78" y="578.02" width="39.84" height="1.6" fill="#000000" opacity="0.07"/><rect x="647.12" y="578.02" width="5.14" height="1.6" fill="#ffffff" opacity="0.13"/><rect x="654.76" y="578.02" width="11.28" height="1.6" fill="#000000" opacity="0.07"/><rect x="668.54" y="578.02" width="5.14" height="1.6" fill="#ffffff" opacity="0.13"/><rect x="676.18" y="578.02" width="4.14" height="1.6" fill="#000000" opacity="0.07"/><rect x="682.82" y="578.02" width="19.42" height="1.6" fill="#ffffff" opacity="0.13"/><rect x="704.74" y="578.02" width="32.70" height="1.6" fill="#000000" opacity="0.07"/><rect x="739.94" y="578.02" width="5.14" height="1.6" fill="#ffffff" opacity="0.13"/><rect x="590.00" y="589.58" width="12.28" height="1.6" fill="#ffffff" opacity="0.13"/><rect x="604.78" y="589.58" width="11.28" height="1.6" fill="#000000" opacity="0.07"/><rect x="618.56" y="589.58" width="12.28" height="1.6" fill="#ffffff" opacity="0.13"/><rect x="633.34" y="589.58" width="32.70" height="1.6" fill="#000000" opacity="0.07"/><rect x="668.54" y="589.58" width="12.28" height="1.6" fill="#ffffff" opacity="0.13"/><rect x="683.32" y="589.58" width="18.42" height="1.6" fill="#000000" opacity="0.07"/><rect x="704.24" y="589.58" width="19.42" height="1.6" fill="#ffffff" opacity="0.13"/><rect x="726.16" y="589.58" width="11.28" height="1.6" fill="#000000" opacity="0.07"/><rect x="739.94" y="589.58" width="5.14" height="1.6" fill="#ffffff" opacity="0.13"/><rect x="590.00" y="601.14" width="12.28" height="1.6" fill="#ffffff" opacity="0.13"/><rect x="604.78" y="601.14" width="4.14" height="1.6" fill="#000000" opacity="0.07"/><rect x="611.42" y="601.14" width="5.14" height="1.6" fill="#ffffff" opacity="0.13"/><rect x="619.06" y="601.14" width="25.56" height="1.6" fill="#000000" opacity="0.07"/><rect x="647.12" y="601.14" width="19.42" height="1.6" fill="#ffffff" opacity="0.13"/><rect x="669.04" y="601.14" width="11.28" height="1.6" fill="#000000" opacity="0.07"/><rect x="682.82" y="601.14" width="12.28" height="1.6" fill="#ffffff" opacity="0.13"/><rect x="697.60" y="601.14" width="39.84" height="1.6" fill="#000000" opacity="0.07"/><rect x="739.94" y="601.14" width="5.14" height="1.6" fill="#ffffff" opacity="0.13"/><rect x="590.00" y="612.70" width="5.14" height="1.6" fill="#ffffff" opacity="0.13"/><rect x="597.64" y="612.70" width="4.14" height="1.6" fill="#000000" opacity="0.07"/><rect x="604.28" y="612.70" width="26.56" height="1.6" fill="#ffffff" opacity="0.13"/><rect x="633.34" y="612.70" width="11.28" height="1.6" fill="#000000" opacity="0.07"/><rect x="647.12" y="612.70" width="5.14" height="1.6" fill="#ffffff" opacity="0.13"/><rect x="654.76" y="612.70" width="4.14" height="1.6" fill="#000000" opacity="0.07"/><rect x="661.40" y="612.70" width="5.14" height="1.6" fill="#ffffff" opacity="0.13"/><rect x="669.04" y="612.70" width="11.28" height="1.6" fill="#000000" opacity="0.07"/><rect x="682.82" y="612.70" width="12.28" height="1.6" fill="#ffffff" opacity="0.13"/><rect x="697.60" y="612.70" width="4.14" height="1.6" fill="#000000" opacity="0.07"/><rect x="704.24" y="612.70" width="19.42" height="1.6" fill="#ffffff" opacity="0.13"/><rect x="726.16" y="612.70" width="18.42" height="1.6" fill="#000000" opacity="0.07"/><rect x="590.00" y="624.26" width="12.28" height="1.6" fill="#ffffff" opacity="0.13"/><rect x="604.78" y="624.26" width="4.14" height="1.6" fill="#000000" opacity="0.07"/><rect x="611.42" y="624.26" width="5.14" height="1.6" fill="#ffffff" opacity="0.13"/><rect x="619.06" y="624.26" width="32.70" height="1.6" fill="#000000" opacity="0.07"/><rect x="654.26" y="624.26" width="5.14" height="1.6" fill="#ffffff" opacity="0.13"/><rect x="661.90" y="624.26" width="4.14" height="1.6" fill="#000000" opacity="0.07"/><rect x="668.54" y="624.26" width="12.28" height="1.6" fill="#ffffff" opacity="0.13"/><rect x="683.32" y="624.26" width="11.28" height="1.6" fill="#000000" opacity="0.07"/><rect x="697.10" y="624.26" width="12.28" height="1.6" fill="#ffffff" opacity="0.13"/><rect x="711.88" y="624.26" width="25.56" height="1.6" fill="#000000" opacity="0.07"/><rect x="739.94" y="624.26" width="5.14" height="1.6" fill="#ffffff" opacity="0.13"/><rect x="590.00" y="635.82" width="19.42" height="1.6" fill="#ffffff" opacity="0.13"/><rect x="611.92" y="635.82" width="4.14" height="1.6" fill="#000000" opacity="0.07"/><rect x="618.56" y="635.82" width="40.84" height="1.6" fill="#ffffff" opacity="0.13"/><rect x="661.90" y="635.82" width="4.14" height="1.6" fill="#000000" opacity="0.07"/><rect x="668.54" y="635.82" width="12.28" height="1.6" fill="#ffffff" opacity="0.13"/><rect x="683.32" y="635.82" width="18.42" height="1.6" fill="#000000" opacity="0.07"/><rect x="704.24" y="635.82" width="19.42" height="1.6" fill="#ffffff" opacity="0.13"/><rect x="726.16" y="635.82" width="11.28" height="1.6" fill="#000000" opacity="0.07"/><rect x="739.94" y="635.82" width="5.14" height="1.6" fill="#ffffff" opacity="0.13"/><rect x="590.00" y="647.38" width="12.28" height="1.6" fill="#ffffff" opacity="0.13"/><rect x="604.78" y="647.38" width="4.14" height="1.6" fill="#000000" opacity="0.07"/><rect x="611.42" y="647.38" width="5.14" height="1.6" fill="#ffffff" opacity="0.13"/><rect x="619.06" y="647.38" width="32.70" height="1.6" fill="#000000" opacity="0.07"/><rect x="654.26" y="647.38" width="5.14" height="1.6" fill="#ffffff" opacity="0.13"/><rect x="661.90" y="647.38" width="18.42" height="1.6" fill="#000000" opacity="0.07"/><rect x="682.82" y="647.38" width="5.14" height="1.6" fill="#ffffff" opacity="0.13"/><rect x="690.46" y="647.38" width="39.84" height="1.6" fill="#000000" opacity="0.07"/><rect x="732.80" y="647.38" width="12.28" height="1.6" fill="#ffffff" opacity="0.13"/><rect x="590.00" y="658.94" width="40.84" height="1.6" fill="#ffffff" opacity="0.13"/><rect x="633.34" y="658.94" width="25.56" height="1.6" fill="#000000" opacity="0.07"/><rect x="661.40" y="658.94" width="5.14" height="1.6" fill="#ffffff" opacity="0.13"/><rect x="669.04" y="658.94" width="4.14" height="1.6" fill="#000000" opacity="0.07"/><rect x="675.68" y="658.94" width="19.42" height="1.6" fill="#ffffff" opacity="0.13"/><rect x="697.60" y="658.94" width="11.28" height="1.6" fill="#000000" opacity="0.07"/><rect x="711.38" y="658.94" width="12.28" height="1.6" fill="#ffffff" opacity="0.13"/><rect x="726.16" y="658.94" width="11.28" height="1.6" fill="#000000" opacity="0.07"/><rect x="739.94" y="658.94" width="5.14" height="1.6" fill="#ffffff" opacity="0.13"/><rect x="590.00" y="670.50" width="5.14" height="1.6" fill="#ffffff" opacity="0.13"/><rect x="597.64" y="670.50" width="32.70" height="1.6" fill="#000000" opacity="0.07"/><rect x="632.84" y="670.50" width="19.42" height="1.6" fill="#ffffff" opacity="0.13"/><rect x="654.76" y="670.50" width="4.14" height="1.6" fill="#000000" opacity="0.07"/><rect x="661.40" y="670.50" width="5.14" height="1.6" fill="#ffffff" opacity="0.13"/><rect x="669.04" y="670.50" width="4.14" height="1.6" fill="#000000" opacity="0.07"/><rect x="675.68" y="670.50" width="5.14" height="1.6" fill="#ffffff" opacity="0.13"/><rect x="683.32" y="670.50" width="4.14" height="1.6" fill="#000000" opacity="0.07"/><rect x="689.96" y="670.50" width="5.14" height="1.6" fill="#ffffff" opacity="0.13"/><rect x="697.60" y="670.50" width="4.14" height="1.6" fill="#000000" opacity="0.07"/><rect x="704.24" y="670.50" width="5.14" height="1.6" fill="#ffffff" opacity="0.13"/><rect x="711.88" y="670.50" width="11.28" height="1.6" fill="#000000" opacity="0.07"/><rect x="725.66" y="670.50" width="19.42" height="1.6" fill="#ffffff" opacity="0.13"/><rect x="590.00" y="682.06" width="5.14" height="1.6" fill="#ffffff" opacity="0.13"/><rect x="597.64" y="682.06" width="32.70" height="1.6" fill="#000000" opacity="0.07"/><rect x="632.84" y="682.06" width="19.42" height="1.6" fill="#ffffff" opacity="0.13"/><rect x="654.76" y="682.06" width="4.14" height="1.6" fill="#000000" opacity="0.07"/><rect x="661.40" y="682.06" width="5.14" height="1.6" fill="#ffffff" opacity="0.13"/><rect x="669.04" y="682.06" width="4.14" height="1.6" fill="#000000" opacity="0.07"/><rect x="675.68" y="682.06" width="5.14" height="1.6" fill="#ffffff" opacity="0.13"/><rect x="683.32" y="682.06" width="4.14" height="1.6" fill="#000000" opacity="0.07"/><rect x="689.96" y="682.06" width="5.14" height="1.6" fill="#ffffff" opacity="0.13"/><rect x="697.60" y="682.06" width="4.14" height="1.6" fill="#000000" opacity="0.07"/><rect x="704.24" y="682.06" width="5.14" height="1.6" fill="#ffffff" opacity="0.13"/><rect x="711.88" y="682.06" width="11.28" height="1.6" fill="#000000" opacity="0.07"/><rect x="725.66" y="682.06" width="19.42" height="1.6" fill="#ffffff" opacity="0.13"/><rect x="590.00" y="693.62" width="19.42" height="1.6" fill="#ffffff" opacity="0.13"/><rect x="611.92" y="693.62" width="4.14" height="1.6" fill="#000000" opacity="0.07"/><rect x="618.56" y="693.62" width="12.28" height="1.6" fill="#ffffff" opacity="0.13"/><rect x="633.34" y="693.62" width="11.28" height="1.6" fill="#000000" opacity="0.07"/><rect x="647.12" y="693.62" width="5.14" height="1.6" fill="#ffffff" opacity="0.13"/><rect x="654.76" y="693.62" width="54.12" height="1.6" fill="#000000" opacity="0.07"/><rect x="711.38" y="693.62" width="12.28" height="1.6" fill="#ffffff" opacity="0.13"/><rect x="726.16" y="693.62" width="18.42" height="1.6" fill="#000000" opacity="0.07"/><rect x="590.00" y="705.18" width="19.42" height="1.6" fill="#ffffff" opacity="0.13"/><rect x="611.92" y="705.18" width="4.14" height="1.6" fill="#000000" opacity="0.07"/><rect x="618.56" y="705.18" width="12.28" height="1.6" fill="#ffffff" opacity="0.13"/><rect x="633.34" y="705.18" width="11.28" height="1.6" fill="#000000" opacity="0.07"/><rect x="647.12" y="705.18" width="5.14" height="1.6" fill="#ffffff" opacity="0.13"/><rect x="654.76" y="705.18" width="39.84" height="1.6" fill="#000000" opacity="0.07"/><rect x="697.10" y="705.18" width="5.14" height="1.6" fill="#ffffff" opacity="0.13"/><rect x="704.74" y="705.18" width="4.14" height="1.6" fill="#000000" opacity="0.07"/><rect x="711.38" y="705.18" width="12.28" height="1.6" fill="#ffffff" opacity="0.13"/><rect x="726.16" y="705.18" width="18.42" height="1.6" fill="#000000" opacity="0.07"/><rect x="590.00" y="716.74" width="5.14" height="1.6" fill="#ffffff" opacity="0.13"/><rect x="597.64" y="716.74" width="4.14" height="1.6" fill="#000000" opacity="0.07"/><rect x="604.28" y="716.74" width="5.14" height="1.6" fill="#ffffff" opacity="0.13"/><rect x="611.92" y="716.74" width="4.14" height="1.6" fill="#000000" opacity="0.07"/><rect x="618.56" y="716.74" width="12.28" height="1.6" fill="#ffffff" opacity="0.13"/><rect x="633.34" y="716.74" width="11.28" height="1.6" fill="#000000" opacity="0.07"/><rect x="647.12" y="716.74" width="26.56" height="1.6" fill="#ffffff" opacity="0.13"/><rect x="676.18" y="716.74" width="4.14" height="1.6" fill="#000000" opacity="0.07"/><rect x="682.82" y="716.74" width="40.84" height="1.6" fill="#ffffff" opacity="0.13"/><rect x="726.16" y="716.74" width="18.42" height="1.6" fill="#000000" opacity="0.07"/><rect x="763.8" y="272.00" width="22.2" height="22.63" fill="#9edae5"/><rect x="763.8" y="294.58" width="22.2" height="22.63" fill="#17becf"/><rect x="763.8" y="317.16" width="22.2" height="22.63" fill="#dbdb8d"/><rect x="763.8" y="339.74" width="22.2" height="22.63" fill="#bcbd22"/><rect x="763.8" y="362.32" width="22.2" height="22.63" fill="#c7c7c7"/><rect x="763.8" y="384.90" width="22.2" height="22.63" fill="#7f7f7f"/><rect x="763.8" y="407.48" width="22.2" height="22.63" fill="#f7b6d2"/><rect x="763.8" y="430.06" width="22.2" height="22.63" fill="#e377c2"/><rect x="763.8" y="452.64" width="22.2" height="22.63" fill="#c49c94"/><rect x="763.8" y="475.22" width="22.2" height="22.63" fill="#8c564b"/><rect x="763.8" y="497.80" width="22.2" height="22.63" fill="#c5b0d5"/><rect x="763.8" y="520.38" width="22.2" height="22.63" fill="#9467bd"/><rect x="763.8" y="542.96" width="22.2" height="22.63" fill="#ff9896"/><rect x="763.8" y="565.54" width="22.2" height="22.63" fill="#d62728"/><rect x="763.8" y="588.12" width="22.2" height="22.63" fill="#98df8a"/><rect x="763.8" y="610.70" width="22.2" height="22.63" fill="#2ca02c"/><rect x="763.8" y="633.28" width="22.2" height="22.63" fill="#ffbb78"/><rect x="763.8" y="655.86" width="22.2" height="22.63" fill="#ff7f0e"/><rect x="763.8" y="678.44" width="22.2" height="22.63" fill="#aec7e8"/><rect x="763.8" y="701.02" width="22.2" height="22.63" fill="#1f77b4"/><rect x="786" y="271.40" width="2" height="0.8" fill="#999" opacity="0.5"/><rect x="789" y="271.20" width="3" height="1.2" fill="#aaa" opacity="0.35"/><rect x="786" y="322.60" width="2" height="0.8" fill="#999" opacity="0.5"/><rect x="789" y="322.40" width="3" height="1.2" fill="#aaa" opacity="0.35"/><rect x="786" y="373.80" width="2" height="0.8" fill="#999" opacity="0.5"/><rect x="789" y="373.60" width="3" height="1.2" fill="#aaa" opacity="0.35"/><rect x="786" y="425.00" width="2" height="0.8" fill="#999" opacity="0.5"/><rect x="789" y="424.80" width="3" height="1.2" fill="#aaa" opacity="0.35"/><rect x="786" y="476.20" width="2" height="0.8" fill="#999" opacity="0.5"/><rect x="789" y="476.00" width="3" height="1.2" fill="#aaa" opacity="0.35"/><rect x="786" y="527.40" width="2" height="0.8" fill="#999" opacity="0.5"/><rect x="789" y="527.20" width="3" height="1.2" fill="#aaa" opacity="0.35"/><rect x="786" y="578.60" width="2" height="0.8" fill="#999" opacity="0.5"/><rect x="789" y="578.40" width="3" height="1.2" fill="#aaa" opacity="0.35"/><rect x="786" y="629.80" width="2" height="0.8" fill="#999" opacity="0.5"/><rect x="789" y="629.60" width="3" height="1.2" fill="#aaa" opacity="0.35"/><rect x="786" y="681.00" width="2" height="0.8" fill="#999" opacity="0.5"/><rect x="789" y="680.80" width="3" height="1.2" fill="#aaa" opacity="0.35"/><rect x="456.5" y="277.08" width="9.5" height="1.4" fill="#777" opacity="0.42"/><rect x="456.5" y="288.64" width="9.5" height="1.4" fill="#777" opacity="0.42"/><rect x="456.5" y="300.20" width="9.5" height="1.4" fill="#777" opacity="0.42"/><rect x="461.3" y="311.76" width="4.7" height="1.4" fill="#777" opacity="0.42"/><rect x="449.4" y="323.32" width="16.6" height="1.4" fill="#777" opacity="0.42"/><rect x="458.9" y="334.88" width="7.1" height="1.4" fill="#777" opacity="0.42"/><rect x="462.4" y="346.44" width="3.6" height="1.4" fill="#777" opacity="0.42"/><rect x="447.0" y="358.00" width="19" height="1.4" fill="#777" opacity="0.42"/><rect x="455.3" y="369.56" width="10.7" height="1.4" fill="#777" opacity="0.42"/><rect x="446.0" y="381.12" width="20" height="1.4" fill="#777" opacity="0.42"/><rect x="455.3" y="392.68" width="10.7" height="1.4" fill="#777" opacity="0.42"/><rect x="451.8" y="404.24" width="14.2" height="1.4" fill="#777" opacity="0.42"/><rect x="455.3" y="415.80" width="10.7" height="1.4" fill="#777" opacity="0.42"/><rect x="446.0" y="427.36" width="20" height="1.4" fill="#777" opacity="0.42"/><rect x="454.2" y="438.92" width="11.8" height="1.4" fill="#777" opacity="0.42"/><rect x="448.2" y="450.48" width="17.8" height="1.4" fill="#777" opacity="0.42"/><rect x="443.5" y="462.30" width="22.5" height="1.4" fill="#777" opacity="0.42"/><rect x="456.4" y="474.08" width="9.6" height="1.4" fill="#777" opacity="0.42"/><rect x="451.6" y="485.64" width="14.4" height="1.4" fill="#777" opacity="0.42"/><rect x="459.6" y="497.20" width="6.4" height="1.4" fill="#777" opacity="0.42"/><rect x="456.4" y="508.76" width="9.6" height="1.4" fill="#777" opacity="0.42"/><rect x="454.8" y="520.32" width="11.2" height="1.4" fill="#777" opacity="0.42"/><rect x="451.6" y="531.88" width="14.4" height="1.4" fill="#777" opacity="0.42"/><rect x="454.8" y="543.44" width="11.2" height="1.4" fill="#777" opacity="0.42"/><rect x="451.6" y="555.00" width="14.4" height="1.4" fill="#777" opacity="0.42"/><rect x="451.6" y="566.56" width="14.4" height="1.4" fill="#777" opacity="0.42"/><rect x="453.2" y="578.12" width="12.8" height="1.4" fill="#777" opacity="0.42"/><rect x="448.4" y="589.68" width="17.6" height="1.4" fill="#777" opacity="0.42"/><rect x="451.6" y="601.24" width="14.4" height="1.4" fill="#777" opacity="0.42"/><rect x="446.8" y="612.80" width="19.2" height="1.4" fill="#777" opacity="0.42"/><rect x="442.0" y="624.36" width="24" height="1.4" fill="#777" opacity="0.42"/><rect x="443.6" y="635.92" width="22.4" height="1.4" fill="#777" opacity="0.42"/><rect x="437.2" y="647.48" width="28.8" height="1.4" fill="#777" opacity="0.42"/><rect x="438.8" y="659.04" width="27.2" height="1.4" fill="#777" opacity="0.42"/><rect x="445.2" y="670.60" width="20.8" height="1.4" fill="#777" opacity="0.42"/><rect x="445.2" y="682.16" width="20.8" height="1.4" fill="#777" opacity="0.42"/><rect x="445.2" y="693.72" width="20.8" height="1.4" fill="#777" opacity="0.42"/><rect x="442.0" y="705.28" width="24" height="1.4" fill="#777" opacity="0.42"/><rect x="451.6" y="716.84" width="14.4" height="1.4" fill="#777" opacity="0.42"/><rect x="470.86" y="725" width="1.4" height="9" fill="#777" opacity="0.42"/><rect x="477.98" y="725" width="1.4" height="10" fill="#777" opacity="0.42"/><rect x="485.10" y="725" width="1.4" height="10" fill="#777" opacity="0.42"/><rect x="492.22" y="725" width="1.4" height="5" fill="#777" opacity="0.42"/><rect x="499.34" y="725" width="1.4" height="17" fill="#777" opacity="0.42"/><rect x="506.46" y="725" width="1.4" height="13" fill="#777" opacity="0.42"/><rect x="513.58" y="725" width="1.4" height="9" fill="#777" opacity="0.42"/><rect x="520.70" y="725" width="1.4" height="18" fill="#777" opacity="0.42"/><rect x="527.82" y="725" width="1.4" height="17" fill="#777" opacity="0.42"/><rect x="534.94" y="725" width="1.4" height="20" fill="#777" opacity="0.42"/><rect x="542.06" y="725" width="1.4" height="17" fill="#777" opacity="0.42"/><rect x="549.18" y="725" width="1.4" height="15" fill="#777" opacity="0.42"/><rect x="556.30" y="725" width="1.4" height="15" fill="#777" opacity="0.42"/><rect x="563.42" y="725" width="1.4" height="18" fill="#777" opacity="0.42"/><rect x="570.54" y="725" width="1.4" height="12" fill="#777" opacity="0.42"/><rect x="577.66" y="725" width="1.4" height="18" fill="#777" opacity="0.42"/><rect x="584.80" y="725" width="1.4" height="22" fill="#777" opacity="0.42"/><rect x="591.87" y="725" width="1.4" height="13.5" fill="#777" opacity="0.42"/><rect x="599.01" y="725" width="1.4" height="15" fill="#777" opacity="0.42"/><rect x="606.15" y="725" width="1.4" height="6" fill="#777" opacity="0.42"/><rect x="613.29" y="725" width="1.4" height="10" fill="#777" opacity="0.42"/><rect x="620.43" y="725" width="1.4" height="11" fill="#777" opacity="0.42"/><rect x="627.57" y="725" width="1.4" height="15" fill="#777" opacity="0.42"/><rect x="634.71" y="725" width="1.4" height="12" fill="#777" opacity="0.42"/><rect x="641.85" y="725" width="1.4" height="15" fill="#777" opacity="0.42"/><rect x="648.99" y="725" width="1.4" height="13.5" fill="#777" opacity="0.42"/><rect x="656.13" y="725" width="1.4" height="12" fill="#777" opacity="0.42"/><rect x="663.27" y="725" width="1.4" height="17" fill="#777" opacity="0.42"/><rect x="670.41" y="725" width="1.4" height="17" fill="#777" opacity="0.42"/><rect x="677.55" y="725" width="1.4" height="21" fill="#777" opacity="0.42"/><rect x="684.69" y="725" width="1.4" height="25" fill="#777" opacity="0.42"/><rect x="691.83" y="725" width="1.4" height="28.4" fill="#777" opacity="0.42"/><rect x="698.97" y="725" width="1.4" height="30" fill="#777" opacity="0.42"/><rect x="706.11" y="725" width="1.4" height="28.4" fill="#777" opacity="0.42"/><rect x="713.25" y="725" width="1.4" height="21" fill="#777" opacity="0.42"/><rect x="720.39" y="725" width="1.4" height="26" fill="#777" opacity="0.42"/><rect x="727.53" y="725" width="1.4" height="21" fill="#777" opacity="0.42"/><rect x="734.67" y="725" width="1.4" height="25" fill="#777" opacity="0.42"/><rect x="741.81" y="725" width="1.4" height="15" fill="#777" opacity="0.42"/></g><rect x="1274.5" y="262" width="171" height="108.6" fill="#2a8ad8" clip-path="url(#cp1)"/><g clip-path="url(#cp1)"><use href="#hmfig" transform="translate(1077.4 13.6) scale(0.46 0.469)"/></g><path d="M1275.8 264 V369.2 H1444.2 V264" fill="none" stroke="#2386d6" stroke-width="2.4"/><path d="M1277.5 264 V367.2 H1442.5 V264" fill="none" stroke="#e8fbff" stroke-width="1"/><rect x="1242" y="374" width="236" height="146" fill="#0f171e"/><rect x="1242" y="522" width="236" height="142" fill="#0f171e"/><rect x="1242" y="666" width="236" height="97" fill="#0f171e"/><rect x="1244.40" y="376.00" width="231.40" height="142.20" fill="#fff" /><rect x="1251.7" y="382.8" width="221.7" height="115.3" fill="none" stroke="#c8c8c8" stroke-width="0.6"/><rect x="1257.25" y="388.80" width="10.04" height="25.91" fill="#6e7e8e" /><rect x="1257.25" y="414.71" width="10.04" height="83.39" fill="#ffcc00" /><rect x="1261.77" y="501.50" width="1.10" height="4.00" fill="#888" opacity="0.6"/><rect x="1277.43" y="388.80" width="10.04" height="25.91" fill="#6e7e8e" /><rect x="1277.43" y="414.71" width="10.04" height="29.20" fill="#ffcc00" /><rect x="1277.43" y="443.91" width="10.04" height="54.20" fill="#4b0f88" /><rect x="1281.95" y="501.50" width="1.10" height="3.00" fill="#888" opacity="0.6"/><rect x="1297.62" y="388.80" width="10.04" height="14.96" fill="#6e7e8e" /><rect x="1297.62" y="403.76" width="10.04" height="3.65" fill="#137f8c" /><rect x="1297.62" y="407.41" width="10.04" height="5.47" fill="#ffcc00" /><rect x="1297.62" y="412.88" width="10.04" height="85.22" fill="#4b0f88" /><rect x="1302.14" y="501.50" width="1.10" height="6.00" fill="#888" opacity="0.6"/><rect x="1317.80" y="388.80" width="10.04" height="109.31" fill="#ffcc00" /><rect x="1322.32" y="501.50" width="1.10" height="9.00" fill="#888" opacity="0.6"/><rect x="1337.98" y="388.80" width="10.04" height="5.84" fill="#6e7e8e" /><rect x="1337.98" y="394.64" width="10.04" height="0.91" fill="#7f8a26" /><rect x="1337.98" y="395.55" width="10.04" height="98.54" fill="#ffcc00" /><rect x="1337.98" y="494.09" width="10.04" height="4.01" fill="#4b0f88" /><rect x="1342.50" y="501.50" width="1.10" height="5.00" fill="#888" opacity="0.6"/><rect x="1358.16" y="388.80" width="10.04" height="1.28" fill="#ffcc00" /><rect x="1358.16" y="390.07" width="10.04" height="108.03" fill="#4b0f88" /><rect x="1362.68" y="501.50" width="1.10" height="2.00" fill="#888" opacity="0.6"/><rect x="1378.35" y="388.80" width="10.04" height="109.31" fill="#6e7e8e" /><rect x="1382.86" y="501.50" width="1.10" height="2.00" fill="#888" opacity="0.6"/><rect x="1398.53" y="388.80" width="10.04" height="101.64" fill="#6e7e8e" /><rect x="1398.53" y="490.44" width="10.04" height="1.46" fill="#7f8a26" /><rect x="1398.53" y="491.90" width="10.04" height="1.82" fill="#ffcc00" /><rect x="1398.53" y="493.72" width="10.04" height="4.38" fill="#4b0f88" /><rect x="1403.05" y="501.50" width="1.10" height="2.00" fill="#888" opacity="0.6"/><rect x="1418.71" y="388.80" width="10.04" height="99.82" fill="#6e7e8e" /><rect x="1418.71" y="488.61" width="10.04" height="6.39" fill="#137f8c" /><rect x="1418.71" y="495.00" width="10.04" height="3.10" fill="#ffcc00" /><rect x="1423.23" y="501.50" width="1.10" height="2.00" fill="#888" opacity="0.6"/><rect x="1438.89" y="388.80" width="10.04" height="92.52" fill="#6e7e8e" /><rect x="1438.89" y="481.31" width="10.04" height="1.46" fill="#7f8a26" /><rect x="1438.89" y="482.77" width="10.04" height="8.58" fill="#ffcc00" /><rect x="1438.89" y="491.35" width="10.04" height="6.75" fill="#4b0f88" /><rect x="1443.41" y="501.50" width="1.10" height="3.00" fill="#888" opacity="0.6"/><rect x="1459.08" y="388.80" width="10.04" height="1.82" fill="#7f8a26" /><rect x="1459.08" y="390.62" width="10.04" height="107.48" fill="#ffcc00" /><rect x="1463.59" y="501.50" width="1.10" height="3.00" fill="#888" opacity="0.6"/><rect x="1252.6" y="384.6" width="19.2" height="20.1" fill="#fff" stroke="#ddd" stroke-width="0.5" opacity="0.95"/><rect x="1254.00" y="386.30" width="4.00" height="2.00" fill="#4b0f88" /><rect x="1259.50" y="386.60" width="6.00" height="1.40" fill="#999" opacity="0.6"/><rect x="1254.00" y="390.20" width="4.00" height="2.00" fill="#ffcc00" /><rect x="1259.50" y="390.50" width="6.00" height="1.40" fill="#999" opacity="0.6"/><rect x="1254.00" y="394.10" width="4.00" height="2.00" fill="#137f8c" /><rect x="1259.50" y="394.40" width="6.00" height="1.40" fill="#999" opacity="0.6"/><rect x="1254.00" y="398.00" width="4.00" height="2.00" fill="#7f8a26" /><rect x="1259.50" y="398.30" width="6.00" height="1.40" fill="#999" opacity="0.6"/><rect x="1254.00" y="401.90" width="4.00" height="2.00" fill="#6e7e8e" /><rect x="1259.50" y="402.20" width="6.00" height="1.40" fill="#999" opacity="0.6"/><rect x="1247.50" y="388.20" width="3.50" height="1.20" fill="#999" opacity="0.6"/><rect x="1247.50" y="410.06" width="3.50" height="1.20" fill="#999" opacity="0.6"/><rect x="1247.50" y="431.92" width="3.50" height="1.20" fill="#999" opacity="0.6"/><rect x="1247.50" y="453.78" width="3.50" height="1.20" fill="#999" opacity="0.6"/><rect x="1247.50" y="475.64" width="3.50" height="1.20" fill="#999" opacity="0.6"/><rect x="1247.50" y="497.50" width="3.50" height="1.20" fill="#999" opacity="0.6"/><text x="1363" y="382.3" font-size="6.2" fill="#333" text-anchor="middle" font-family="Liberation Sans">Dependency of "Flags" in attack type</text><text x="1363" y="516.5" font-size="6.5" fill="#444" text-anchor="middle" font-family="Liberation Sans">Flags</text><rect x="1244.40" y="524.20" width="231.40" height="137.80" fill="#fff" /><rect x="1252.2" y="531.5" width="221.2" height="115" fill="none" stroke="#c8c8c8" stroke-width="0.6"/><rect x="1270.85" y="536.99" width="36.50" height="16.97" fill="#6e7e8e" /><rect x="1270.85" y="553.96" width="36.50" height="53.83" fill="#ffcc00" /><rect x="1270.85" y="607.79" width="36.50" height="38.14" fill="#4b0f88" /><rect x="1288.59" y="648.50" width="1.10" height="4.00" fill="#888" opacity="0.6"/><rect x="1344.75" y="536.99" width="36.50" height="55.66" fill="#6e7e8e" /><rect x="1344.75" y="592.64" width="36.50" height="1.46" fill="#137f8c" /><rect x="1344.75" y="594.10" width="36.50" height="6.20" fill="#ffcc00" /><rect x="1344.75" y="600.31" width="36.50" height="45.62" fill="#4b0f88" /><rect x="1362.50" y="648.50" width="1.10" height="4.00" fill="#888" opacity="0.6"/><rect x="1418.66" y="536.99" width="36.50" height="89.42" fill="#6e7e8e" /><rect x="1418.66" y="626.40" width="36.50" height="12.77" fill="#ffcc00" /><rect x="1418.66" y="639.18" width="36.50" height="6.75" fill="#4b0f88" /><rect x="1436.41" y="648.50" width="1.10" height="4.00" fill="#888" opacity="0.6"/><rect x="1454" y="533" width="17.6" height="19.5" fill="#fff" opacity="0.9"/><rect x="1455.00" y="534.50" width="4.00" height="2.00" fill="#4b0f88" /><rect x="1460.50" y="534.80" width="6.00" height="1.40" fill="#999" opacity="0.6"/><rect x="1455.00" y="538.50" width="4.00" height="2.00" fill="#ffcc00" /><rect x="1460.50" y="538.80" width="6.00" height="1.40" fill="#999" opacity="0.6"/><rect x="1455.00" y="542.50" width="4.00" height="2.00" fill="#137f8c" /><rect x="1460.50" y="542.80" width="6.00" height="1.40" fill="#999" opacity="0.6"/><rect x="1455.00" y="546.50" width="4.00" height="2.00" fill="#7f8a26" /><rect x="1460.50" y="546.80" width="6.00" height="1.40" fill="#999" opacity="0.6"/><rect x="1455.00" y="550.50" width="4.00" height="2.00" fill="#6e7e8e" /><rect x="1460.50" y="550.80" width="6.00" height="1.40" fill="#999" opacity="0.6"/><rect x="1247.50" y="536.39" width="3.50" height="1.20" fill="#999" opacity="0.6"/><rect x="1247.50" y="558.17" width="3.50" height="1.20" fill="#999" opacity="0.6"/><rect x="1247.50" y="579.96" width="3.50" height="1.20" fill="#999" opacity="0.6"/><rect x="1247.50" y="601.75" width="3.50" height="1.20" fill="#999" opacity="0.6"/><rect x="1247.50" y="623.54" width="3.50" height="1.20" fill="#999" opacity="0.6"/><rect x="1247.50" y="645.33" width="3.50" height="1.20" fill="#999" opacity="0.6"/><text x="1363" y="530.3" font-size="6.2" fill="#333" text-anchor="middle" font-family="Liberation Sans">Dependency of "Protocols" in Attack types</text><text x="1363" y="659.5" font-size="6.2" fill="#444" text-anchor="middle" font-family="Liberation Sans">Protocol Types</text><g clip-path="url(#cp4)"><rect x="1244.00" y="667.90" width="231.60" height="100.00" fill="#fff" /><rect x="1252.8" y="674.8" width="221" height="100" fill="none" stroke="#c8c8c8" stroke-width="0.6"/><text x="1361" y="675.3" font-size="6.2" fill="#333" text-anchor="middle" font-family="Liberation Sans">Dependency of "Services" in Attack types</text><rect x="1253.50" y="681.00" width="219.50" height="94.00" fill="#f3eef8" /><rect x="1252.32" y="681.00" width="1.90" height="94.00" fill="#9ea8b6" /><rect x="1254.22" y="681.00" width="1.60" height="94.00" fill="#cfd5de" /><rect x="1256.69" y="681.00" width="1.90" height="94.00" fill="#8f62c8" /><rect x="1258.59" y="681.00" width="1.60" height="94.00" fill="#c8a2f2" /><rect x="1261.58" y="681.00" width="1.90" height="94.00" fill="#fbd95e" /><rect x="1263.48" y="681.00" width="1.60" height="94.00" fill="#fde9a8" /><rect x="1264.55" y="681.00" width="1.90" height="94.00" fill="#fbd95e" /><rect x="1266.45" y="681.00" width="1.60" height="94.00" fill="#fde9a8" /><rect x="1264.55" y="709.78" width="1.90" height="65.22" fill="#8f62c8" /><rect x="1266.45" y="709.78" width="1.60" height="65.22" fill="#c8a2f2" /><rect x="1268.56" y="681.00" width="1.90" height="94.00" fill="#8f62c8" /><rect x="1270.46" y="681.00" width="1.60" height="94.00" fill="#c8a2f2" /><rect x="1271.71" y="681.00" width="1.90" height="94.00" fill="#8f62c8" /><rect x="1273.61" y="681.00" width="1.60" height="94.00" fill="#c8a2f2" /><rect x="1274.68" y="681.00" width="1.90" height="94.00" fill="#8f62c8" /><rect x="1276.58" y="681.00" width="1.60" height="94.00" fill="#c8a2f2" /><rect x="1277.82" y="681.00" width="1.90" height="94.00" fill="#8f62c8" /><rect x="1279.72" y="681.00" width="1.60" height="94.00" fill="#c8a2f2" /><rect x="1277.82" y="681.00" width="1.90" height="4.33" fill="#fbd95e" /><rect x="1279.72" y="681.00" width="1.60" height="4.33" fill="#fde9a8" /><rect x="1282.01" y="681.00" width="1.90" height="94.00" fill="#8f62c8" /><rect x="1283.91" y="681.00" width="1.60" height="94.00" fill="#c8a2f2" /><rect x="1282.01" y="681.00" width="1.90" height="4.33" fill="#fbd95e" /><rect x="1283.91" y="681.00" width="1.60" height="4.33" fill="#fde9a8" /><rect x="1286.56" y="681.00" width="1.90" height="94.00" fill="#9ea8b6" /><rect x="1288.46" y="681.00" width="1.60" height="94.00" fill="#cfd5de" /><rect x="1286.56" y="687.95" width="1.90" height="4.37" fill="#fbd95e" /><rect x="1288.46" y="687.95" width="1.60" height="4.37" fill="#fde9a8" /><rect x="1290.40" y="681.00" width="1.90" height="94.00" fill="#8f62c8" /><rect x="1292.30" y="681.00" width="1.60" height="94.00" fill="#c8a2f2" /><rect x="1293.89" y="681.00" width="1.90" height="94.00" fill="#8f62c8" /><rect x="1295.79" y="681.00" width="1.60" height="94.00" fill="#c8a2f2" /><rect x="1293.89" y="681.00" width="1.90" height="4.33" fill="#fbd95e" /><rect x="1295.79" y="681.00" width="1.60" height="4.33" fill="#fde9a8" /><rect x="1297.04" y="681.00" width="1.90" height="94.00" fill="#9ea8b6" /><rect x="1298.94" y="681.00" width="1.60" height="94.00" fill="#cfd5de" /><rect x="1297.04" y="692.31" width="1.90" height="82.69" fill="#fbd95e" /><rect x="1298.94" y="692.31" width="1.60" height="82.69" fill="#fde9a8" /><rect x="1300.88" y="681.00" width="1.90" height="94.00" fill="#8f62c8" /><rect x="1302.78" y="681.00" width="1.60" height="94.00" fill="#c8a2f2" /><rect x="1300.88" y="681.00" width="1.90" height="6.95" fill="#fbd95e" /><rect x="1302.78" y="681.00" width="1.60" height="6.95" fill="#fde9a8" /><rect x="1304.72" y="681.00" width="1.90" height="94.00" fill="#8f62c8" /><rect x="1306.62" y="681.00" width="1.60" height="94.00" fill="#c8a2f2" /><rect x="1308.22" y="681.00" width="1.90" height="94.00" fill="#8f62c8" /><rect x="1310.12" y="681.00" width="1.60" height="94.00" fill="#c8a2f2" /><rect x="1308.22" y="715.02" width="1.90" height="3.49" fill="#fbd95e" /><rect x="1310.12" y="715.02" width="1.60" height="3.49" fill="#fde9a8" /><rect x="1311.71" y="681.00" width="1.90" height="94.00" fill="#9ea8b6" /><rect x="1313.61" y="681.00" width="1.60" height="94.00" fill="#cfd5de" /><rect x="1311.71" y="739.48" width="1.90" height="17.47" fill="#3f9aa0" /><rect x="1313.61" y="739.48" width="1.60" height="17.47" fill="#7cc0c4" /><rect x="1314.85" y="681.00" width="1.90" height="94.00" fill="#9ea8b6" /><rect x="1316.75" y="681.00" width="1.60" height="94.00" fill="#cfd5de" /><rect x="1318.35" y="681.00" width="1.90" height="94.00" fill="#8f62c8" /><rect x="1320.25" y="681.00" width="1.60" height="94.00" fill="#c8a2f2" /><rect x="1318.35" y="681.00" width="1.90" height="6.95" fill="#fbd95e" /><rect x="1320.25" y="681.00" width="1.60" height="6.95" fill="#fde9a8" /><rect x="1321.49" y="681.00" width="1.90" height="94.00" fill="#fbd95e" /><rect x="1323.39" y="681.00" width="1.60" height="94.00" fill="#fde9a8" /><rect x="1325.33" y="681.00" width="1.90" height="94.00" fill="#8f62c8" /><rect x="1327.23" y="681.00" width="1.60" height="94.00" fill="#c8a2f2" /><rect x="1328.30" y="681.00" width="1.90" height="94.00" fill="#9ea8b6" /><rect x="1330.20" y="681.00" width="1.60" height="94.00" fill="#cfd5de" /><rect x="1330.92" y="681.00" width="1.90" height="94.00" fill="#fbd95e" /><rect x="1332.82" y="681.00" width="1.60" height="94.00" fill="#fde9a8" /><rect x="1334.42" y="681.00" width="1.90" height="94.00" fill="#8f62c8" /><rect x="1336.32" y="681.00" width="1.60" height="94.00" fill="#c8a2f2" /><rect x="1337.91" y="681.00" width="1.90" height="94.00" fill="#fbd95e" /><rect x="1339.81" y="681.00" width="1.60" height="94.00" fill="#fde9a8" /><rect x="1341.40" y="681.00" width="1.90" height="94.00" fill="#8f62c8" /><rect x="1343.30" y="681.00" width="1.60" height="94.00" fill="#c8a2f2" /><rect x="1341.40" y="681.00" width="1.90" height="1.71" fill="#fbd95e" /><rect x="1343.30" y="681.00" width="1.60" height="1.71" fill="#fde9a8" /><rect x="1344.55" y="681.00" width="1.90" height="94.00" fill="#8f62c8" /><rect x="1346.45" y="681.00" width="1.60" height="94.00" fill="#c8a2f2" /><rect x="1348.04" y="681.00" width="1.90" height="94.00" fill="#8f62c8" /><rect x="1349.94" y="681.00" width="1.60" height="94.00" fill="#c8a2f2" /><rect x="1351.53" y="681.00" width="1.90" height="94.00" fill="#8f62c8" /><rect x="1353.43" y="681.00" width="1.60" height="94.00" fill="#c8a2f2" /><rect x="1355.90" y="681.00" width="1.90" height="94.00" fill="#8f62c8" /><rect x="1357.80" y="681.00" width="1.60" height="94.00" fill="#c8a2f2" /><rect x="1355.90" y="681.00" width="1.90" height="4.33" fill="#fbd95e" /><rect x="1357.80" y="681.00" width="1.60" height="4.33" fill="#fde9a8" /><rect x="1359.92" y="681.00" width="1.90" height="94.00" fill="#8f62c8" /><rect x="1361.82" y="681.00" width="1.60" height="94.00" fill="#c8a2f2" /><rect x="1364.63" y="681.00" width="1.90" height="94.00" fill="#8f62c8" /><rect x="1366.53" y="681.00" width="1.60" height="94.00" fill="#c8a2f2" /><rect x="1364.63" y="681.00" width="1.90" height="5.20" fill="#fbd95e" /><rect x="1366.53" y="681.00" width="1.60" height="5.20" fill="#fde9a8" /><rect x="1369.35" y="681.00" width="1.90" height="94.00" fill="#8f62c8" /><rect x="1371.25" y="681.00" width="1.60" height="94.00" fill="#c8a2f2" /><rect x="1372.84" y="681.00" width="1.90" height="94.00" fill="#8f62c8" /><rect x="1374.74" y="681.00" width="1.60" height="94.00" fill="#c8a2f2" /><rect x="1376.86" y="681.00" width="1.90" height="94.00" fill="#8f62c8" /><rect x="1378.76" y="681.00" width="1.60" height="94.00" fill="#c8a2f2" /><rect x="1379.83" y="681.00" width="1.90" height="94.00" fill="#8f62c8" /><rect x="1381.73" y="681.00" width="1.60" height="94.00" fill="#c8a2f2" /><rect x="1379.83" y="681.00" width="1.90" height="5.20" fill="#fbd95e" /><rect x="1381.73" y="681.00" width="1.60" height="5.20" fill="#fde9a8" /><rect x="1385.07" y="681.00" width="1.90" height="94.00" fill="#8f62c8" /><rect x="1386.97" y="681.00" width="1.60" height="94.00" fill="#c8a2f2" /><rect x="1388.56" y="681.00" width="1.90" height="94.00" fill="#9ea8b6" /><rect x="1390.46" y="681.00" width="1.60" height="94.00" fill="#cfd5de" /><rect x="1392.58" y="681.00" width="1.90" height="94.00" fill="#9ea8b6" /><rect x="1394.48" y="681.00" width="1.60" height="94.00" fill="#cfd5de" /><rect x="1392.58" y="745.59" width="1.90" height="29.41" fill="#fbd95e" /><rect x="1394.48" y="745.59" width="1.60" height="29.41" fill="#fde9a8" /><rect x="1396.08" y="681.00" width="1.90" height="94.00" fill="#fbd95e" /><rect x="1397.98" y="681.00" width="1.60" height="94.00" fill="#fde9a8" /><rect x="1399.04" y="681.00" width="1.90" height="94.00" fill="#8f62c8" /><rect x="1400.94" y="681.00" width="1.60" height="94.00" fill="#c8a2f2" /><rect x="1399.04" y="681.00" width="1.90" height="11.31" fill="#fbd95e" /><rect x="1400.94" y="681.00" width="1.60" height="11.31" fill="#fde9a8" /><rect x="1401.84" y="681.00" width="1.90" height="94.00" fill="#9ea8b6" /><rect x="1403.74" y="681.00" width="1.60" height="94.00" fill="#cfd5de" /><rect x="1405.33" y="681.00" width="1.90" height="94.00" fill="#9ea8b6" /><rect x="1407.23" y="681.00" width="1.60" height="94.00" fill="#cfd5de" /><rect x="1405.33" y="681.00" width="1.90" height="5.20" fill="#fbd95e" /><rect x="1407.23" y="681.00" width="1.60" height="5.20" fill="#fde9a8" /><rect x="1407.78" y="681.00" width="1.90" height="94.00" fill="#8f62c8" /><rect x="1409.68" y="681.00" width="1.60" height="94.00" fill="#c8a2f2" /><rect x="1407.78" y="681.00" width="1.90" height="28.78" fill="#fbd95e" /><rect x="1409.68" y="681.00" width="1.60" height="28.78" fill="#fde9a8" /><rect x="1411.27" y="681.00" width="1.90" height="94.00" fill="#9ea8b6" /><rect x="1413.17" y="681.00" width="1.60" height="94.00" fill="#cfd5de" /><rect x="1414.77" y="681.00" width="1.90" height="94.00" fill="#8f62c8" /><rect x="1416.67" y="681.00" width="1.60" height="94.00" fill="#c8a2f2" /><rect x="1414.77" y="681.00" width="1.90" height="25.29" fill="#fbd95e" /><rect x="1416.67" y="681.00" width="1.60" height="25.29" fill="#fde9a8" /><rect x="1418.26" y="681.00" width="1.90" height="94.00" fill="#8f62c8" /><rect x="1420.16" y="681.00" width="1.60" height="94.00" fill="#c8a2f2" /><rect x="1418.26" y="681.00" width="1.90" height="21.79" fill="#fbd95e" /><rect x="1420.16" y="681.00" width="1.60" height="21.79" fill="#fde9a8" /><rect x="1421.40" y="681.00" width="1.90" height="94.00" fill="#9ea8b6" /><rect x="1423.30" y="681.00" width="1.60" height="94.00" fill="#cfd5de" /><rect x="1425.25" y="681.00" width="1.90" height="94.00" fill="#9ea8b6" /><rect x="1427.15" y="681.00" width="1.60" height="94.00" fill="#cfd5de" /><rect x="1428.74" y="681.00" width="1.90" height="94.00" fill="#8f62c8" /><rect x="1430.64" y="681.00" width="1.60" height="94.00" fill="#c8a2f2" /><rect x="1428.74" y="681.00" width="1.90" height="10.44" fill="#fbd95e" /><rect x="1430.64" y="681.00" width="1.60" height="10.44" fill="#fde9a8" /><rect x="1433.28" y="681.00" width="1.90" height="94.00" fill="#8f62c8" /><rect x="1435.18" y="681.00" width="1.60" height="94.00" fill="#c8a2f2" /><rect x="1436.77" y="681.00" width="1.90" height="94.00" fill="#8f62c8" /><rect x="1438.67" y="681.00" width="1.60" height="94.00" fill="#c8a2f2" /><rect x="1439.74" y="681.00" width="1.90" height="94.00" fill="#8f62c8" /><rect x="1441.64" y="681.00" width="1.60" height="94.00" fill="#c8a2f2" /><rect x="1443.76" y="681.00" width="1.90" height="94.00" fill="#9ea8b6" /><rect x="1445.66" y="681.00" width="1.60" height="94.00" fill="#cfd5de" /><rect x="1446.73" y="681.00" width="1.90" height="94.00" fill="#9ea8b6" /><rect x="1448.63" y="681.00" width="1.60" height="94.00" fill="#cfd5de" /><rect x="1449.35" y="681.00" width="1.90" height="94.00" fill="#9ea8b6" /><rect x="1451.25" y="681.00" width="1.60" height="94.00" fill="#cfd5de" /><rect x="1449.35" y="747.34" width="1.90" height="27.66" fill="#8f62c8" /><rect x="1451.25" y="747.34" width="1.60" height="27.66" fill="#c8a2f2" /><rect x="1451.97" y="681.00" width="1.90" height="94.00" fill="#8f62c8" /><rect x="1453.87" y="681.00" width="1.60" height="94.00" fill="#c8a2f2" /><rect x="1451.97" y="694.93" width="1.90" height="2.62" fill="#fbd95e" /><rect x="1453.87" y="694.93" width="1.60" height="2.62" fill="#fde9a8" /><rect x="1455.99" y="681.00" width="1.90" height="94.00" fill="#9ea8b6" /><rect x="1457.89" y="681.00" width="1.60" height="94.00" fill="#cfd5de" /><rect x="1458.96" y="681.00" width="1.90" height="94.00" fill="#9ea8b6" /><rect x="1460.86" y="681.00" width="1.60" height="94.00" fill="#cfd5de" /><rect x="1462.45" y="681.00" width="1.90" height="94.00" fill="#8f62c8" /><rect x="1464.35" y="681.00" width="1.60" height="94.00" fill="#c8a2f2" /><rect x="1465.94" y="681.00" width="1.90" height="94.00" fill="#8f62c8" /><rect x="1467.84" y="681.00" width="1.60" height="94.00" fill="#c8a2f2" /><rect x="1469.44" y="681.00" width="1.90" height="94.00" fill="#8f62c8" /><rect x="1471.34" y="681.00" width="1.60" height="94.00" fill="#c8a2f2" /><rect x="1472.06" y="681.00" width="1.90" height="94.00" fill="#8f62c8" /><rect x="1473.96" y="681.00" width="1.60" height="94.00" fill="#c8a2f2" /><rect x="1472.06" y="681.00" width="1.90" height="3.45" fill="#fbd95e" /><rect x="1473.96" y="681.00" width="1.60" height="3.45" fill="#fde9a8" /><rect x="1247.50" y="680.40" width="3.50" height="1.20" fill="#999" opacity="0.6"/><rect x="1247.50" y="696.90" width="3.50" height="1.20" fill="#999" opacity="0.6"/><rect x="1247.50" y="713.40" width="3.50" height="1.20" fill="#999" opacity="0.6"/><rect x="1247.50" y="729.90" width="3.50" height="1.20" fill="#999" opacity="0.6"/></g><path d="M1483 277 L1488.5 271.5 L1494 277 Z" fill="#3a4650"/><rect x="1481.5" y="280.5" width="12" height="465" rx="6" fill="none" stroke="#2c3843" stroke-width="1.2"/><rect x="1483" y="601" width="9" height="75" rx="4.5" fill="#5d6974"/><path d="M1483 749 L1488.5 754.5 L1494 749 Z" fill="#3a4650"/><path d="M444 466 L444 481 L447.5 477.5 L450.5 484 L452.5 483 L449.5 476.8 L454.5 476.8 Z" fill="#fff" stroke="#111" stroke-width="1" stroke-linejoin="round"/><path d="M1402 522.5 L1402 537 L1405.5 533.5 L1408.3 540 L1410.3 539 L1407.5 532.8 L1412.3 532.8 Z" fill="#fff" stroke="#111" stroke-width="1" stroke-linejoin="round"/></svg><div style="position:absolute;left:0px;top:766px;width:1500px;height:2px;background:#56636d;"></div><div style="position:absolute;left:579px;top:768px;width:92px;height:19px;background:#2a3640;border-radius:3px;"></div><div style="position:absolute;left:674px;top:768px;width:31px;height:19px;background:#2a3640;border-radius:3px;"></div><div style="position:absolute;left:708px;top:768px;width:31px;height:19px;background:#2a3640;border-radius:3px;"></div><div style="position:absolute;left:742px;top:768px;width:96px;height:19px;background:#2a3640;border-radius:3px;"></div><div style="position:absolute;left:841px;top:766px;width:34px;height:23px;background:#3a4651;border-radius:0 0 3px 3px;"></div><div style="position:absolute;left:841px;top:766px;width:34px;height:3px;background:#2a6cb3;"></div><div style="position:absolute;left:878px;top:768px;width:45px;height:19px;background:#2a3640;border-radius:3px;"></div><svg style="position:absolute;left:733px;top:796px;overflow:visible;" width="16" height="15" viewBox="0 0 16 15"><path d="M4 1.5 L1 4.5 L4 7.5 M9 1.5 L12 4.5 L9 7.5" fill="none" stroke="#e0e0e0" stroke-width="1.4"/><path d="M6 10 L9 13 L14.5 7.5" fill="none" stroke="#e0e0e0" stroke-width="1.6"/></svg><svg style="position:absolute;left:892px;top:796px;overflow:visible;" width="14" height="14" viewBox="0 0 14 14"><path d="M7 1 L12.5 4 V10 L7 13 L1.5 10 V4 Z M1.5 4 L7 7 L12.5 4 M7 7 V13" fill="none" stroke="#e0e0e0" stroke-width="1.5" stroke-linejoin="round"/></svg>
<div style="position:absolute;left:25.0px;top:34.15px;font-size:14px;line-height:14px;color:#3a3a3a;font-weight:400;white-space:pre;transform-origin:0 0;transform:scaleX(0.9051);-webkit-text-stroke:0.3px #3a3a3a;">Spyder (Python 3.8)</div><div style="position:absolute;left:7.7px;top:63.07px;font-size:13.5px;line-height:13.5px;color:#dfe1e2;font-weight:400;white-space:pre;transform-origin:0 0;transform:scaleX(0.9005);-webkit-text-stroke:0.3px #dfe1e2;"><u>F</u>ile</div><div style="position:absolute;left:36.0px;top:63.07px;font-size:13.5px;line-height:13.5px;color:#dfe1e2;font-weight:400;white-space:pre;transform-origin:0 0;transform:scaleX(0.9585);-webkit-text-stroke:0.3px #dfe1e2;"><u>E</u>dit</div><div style="position:absolute;left:66.7px;top:63.07px;font-size:13.5px;line-height:13.5px;color:#dfe1e2;font-weight:400;white-space:pre;transform-origin:0 0;transform:scaleX(0.8953);-webkit-text-stroke:0.3px #dfe1e2;"><u>S</u>earch</div><div style="position:absolute;left:114.3px;top:63.07px;font-size:13.5px;line-height:13.5px;color:#dfe1e2;font-weight:400;white-space:pre;transform-origin:0 0;transform:scaleX(0.9280);-webkit-text-stroke:0.3px #dfe1e2;"><u>S</u>ource</div><div style="position:absolute;left:162.3px;top:63.07px;font-size:13.5px;line-height:13.5px;color:#dfe1e2;font-weight:400;white-space:pre;transform-origin:0 0;transform:scaleX(0.9287);-webkit-text-stroke:0.3px #dfe1e2;"><u>R</u>un</div><div style="position:absolute;left:194.3px;top:63.07px;font-size:13.5px;line-height:13.5px;color:#dfe1e2;font-weight:400;white-space:pre;transform-origin:0 0;transform:scaleX(0.9548);-webkit-text-stroke:0.3px #dfe1e2;"><u>D</u>ebug</div><div style="position:absolute;left:241.7px;top:63.07px;font-size:13.5px;line-height:13.5px;color:#dfe1e2;font-weight:400;white-space:pre;transform-origin:0 0;transform:scaleX(0.9293);-webkit-text-stroke:0.3px #dfe1e2;"><u>C</u>onsoles</div><div style="position:absolute;left:303.0px;top:63.07px;font-size:13.5px;line-height:13.5px;color:#dfe1e2;font-weight:400;white-space:pre;transform-origin:0 0;transform:scaleX(0.9368);-webkit-text-stroke:0.3px #dfe1e2;"><u>P</u>rojects</div><div style="position:absolute;left:357.3px;top:63.07px;font-size:13.5px;line-height:13.5px;color:#dfe1e2;font-weight:400;white-space:pre;transform-origin:0 0;transform:scaleX(0.9519);-webkit-text-stroke:0.3px #dfe1e2;"><u>T</u>ools</div><div style="position:absolute;left:396.7px;top:63.07px;font-size:13.5px;line-height:13.5px;color:#dfe1e2;font-weight:400;white-space:pre;transform-origin:0 0;transform:scaleX(0.9404);-webkit-text-stroke:0.3px #dfe1e2;"><u>V</u>iew</div><div style="position:absolute;left:432.7px;top:63.07px;font-size:13.5px;line-height:13.5px;color:#dfe1e2;font-weight:400;white-space:pre;transform-origin:0 0;transform:scaleX(0.9832);-webkit-text-stroke:0.3px #dfe1e2;"><u>H</u>elp</div><div style="position:absolute;left:5.0px;top:132.12px;font-size:12.5px;line-height:12.5px;color:#e0e1e3;font-weight:400;white-space:pre;transform-origin:0 0;transform:scaleX(0.9595);-webkit-text-stroke:0.3px #e0e1e3;">F:\PythonRun\Cyber_Thread\UNSW\Big_data.py</div><div style="position:absolute;left:33.0px;top:154.82px;font-size:12.5px;line-height:12.5px;color:#dfe1e3;font-weight:400;white-space:pre;transform-origin:0 0;transform:scaleX(0.9692);-webkit-text-stroke:0.3px #dfe1e3;">Big_data.py</div><div style="position:absolute;left:130.0px;top:156.92px;font-size:12.5px;line-height:12.5px;color:#dfe1e3;font-weight:400;white-space:pre;transform-origin:0 0;transform:scaleX(0.9245);-webkit-text-stroke:0.3px #dfe1e3;">CNN_Train_Model.py</div><div style="position:absolute;left:273.3px;top:156.92px;font-size:12.5px;line-height:12.5px;color:#dfe1e3;font-weight:400;white-space:pre;transform-origin:0 0;transform:scaleX(0.9368);-webkit-text-stroke:0.3px #dfe1e3;">RNN.py</div><div style="position:absolute;left:30.0px;top:184.77px;font-size:13.5px;line-height:13.5px;color:#e6eaee;font-weight:400;white-space:pre;transform-origin:0 0;transform:scaleX(1.0208);-webkit-text-stroke:0.3px #e6eaee;-webkit-text-stroke:0.6px #e6eaee;">368</div><div style="position:absolute;left:320.7px;top:233.00px;font-size:13px;line-height:13px;color:#e0e1e3;font-weight:400;white-space:pre;transform-origin:0 0;transform:scaleX(0.9548);-webkit-text-stroke:0.3px #e0e1e3;">19 %</div><div style="position:absolute;left:919.2px;top:101.00px;font-size:13px;line-height:13px;color:#e0e1e3;font-weight:400;white-space:pre;transform-origin:0 0;transform:scaleX(0.9106);-webkit-text-stroke:0.3px #e0e1e3;">F:\PythonRun\Cyber_Thread\UNSW</div><div style="position:absolute;left:582.0px;top:773.22px;font-size:12.5px;line-height:12.5px;color:#d8dbde;font-weight:400;white-space:pre;transform-origin:0 0;transform:scaleX(0.9522);-webkit-text-stroke:0.3px #d8dbde;">IPython console</div><div style="position:absolute;left:677.3px;top:773.22px;font-size:12.5px;line-height:12.5px;color:#d8dbde;font-weight:400;white-space:pre;transform-origin:0 0;transform:scaleX(0.8975);-webkit-text-stroke:0.3px #d8dbde;">Files</div><div style="position:absolute;left:711.3px;top:773.22px;font-size:12.5px;line-height:12.5px;color:#d8dbde;font-weight:400;white-space:pre;transform-origin:0 0;transform:scaleX(0.9215);-webkit-text-stroke:0.3px #d8dbde;">Help</div><div style="position:absolute;left:745.6px;top:773.22px;font-size:12.5px;line-height:12.5px;color:#d8dbde;font-weight:400;white-space:pre;transform-origin:0 0;transform:scaleX(0.9489);-webkit-text-stroke:0.3px #d8dbde;">Variable explorer</div><div style="position:absolute;left:845.5px;top:774.92px;font-size:12.5px;line-height:12.5px;color:#d8dbde;font-weight:400;white-space:pre;transform-origin:0 0;transform:scaleX(0.9390);-webkit-text-stroke:0.3px #d8dbde;">Plots</div><div style="position:absolute;left:881.5px;top:773.22px;font-size:12.5px;line-height:12.5px;color:#d8dbde;font-weight:400;white-space:pre;transform-origin:0 0;transform:scaleX(0.9793);-webkit-text-stroke:0.3px #d8dbde;">History</div><div style="position:absolute;left:755.5px;top:798.42px;font-size:12.5px;line-height:12.5px;color:#d3d6d9;font-weight:400;white-space:pre;transform-origin:0 0;transform:scaleX(0.9431);-webkit-text-stroke:0.3px #d3d6d9;">LSP Python: ready</div><div style="position:absolute;left:915.4px;top:798.42px;font-size:12.5px;line-height:12.5px;color:#d3d6d9;font-weight:400;white-space:pre;transform-origin:0 0;transform:scaleX(0.9700);-webkit-text-stroke:0.3px #d3d6d9;">conda: base (Python 3.8.5)</div><div style="position:absolute;left:1100.7px;top:798.42px;font-size:12.5px;line-height:12.5px;color:#d3d6d9;font-weight:400;white-space:pre;transform-origin:0 0;transform:scaleX(0.9347);-webkit-text-stroke:0.3px #d3d6d9;">Line 368, Col 1</div><div style="position:absolute;left:1218.3px;top:798.42px;font-size:12.5px;line-height:12.5px;color:#d3d6d9;font-weight:400;white-space:pre;transform-origin:0 0;transform:scaleX(0.8949);-webkit-text-stroke:0.3px #d3d6d9;">UTF-8</div><div style="position:absolute;left:1289.3px;top:798.42px;font-size:12.5px;line-height:12.5px;color:#d3d6d9;font-weight:400;white-space:pre;transform-origin:0 0;transform:scaleX(0.8390);-webkit-text-stroke:0.3px #d3d6d9;">CRLF</div><div style="position:absolute;left:1356.0px;top:798.42px;font-size:12.5px;line-height:12.5px;color:#d3d6d9;font-weight:400;white-space:pre;transform-origin:0 0;transform:scaleX(0.9219);-webkit-text-stroke:0.3px #d3d6d9;">RW</div><div style="position:absolute;left:1417.7px;top:798.42px;font-size:12.5px;line-height:12.5px;color:#d3d6d9;font-weight:400;white-space:pre;transform-origin:0 0;transform:scaleX(0.9470);-webkit-text-stroke:0.3px #d3d6d9;">Mem 69%</div>
</body></html>
